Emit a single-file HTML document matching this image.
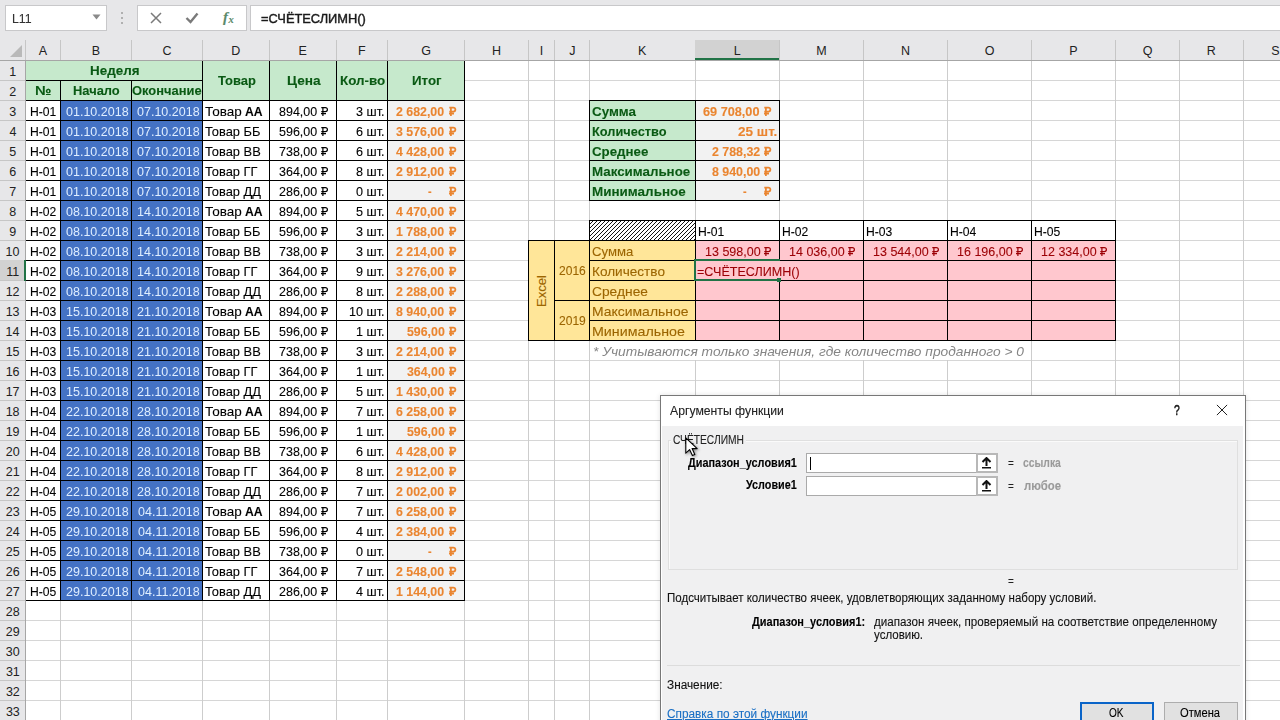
<!DOCTYPE html><html><head><meta charset="utf-8"><style>
html,body{margin:0;padding:0;}
body{width:1280px;height:720px;overflow:hidden;position:relative;background:#fff;font-family:"Liberation Sans",sans-serif;}
body>div{position:absolute;}
.t{white-space:nowrap;transform-origin:0 0;-webkit-text-stroke:0.1px currentColor;}
</style></head><body>
<div style="left:0px;top:0px;width:1280px;height:40px;background:#e7e7e9;"></div>
<div style="left:5px;top:5px;width:102px;height:26px;background:#fff;border:1px solid #c8c8ca;box-sizing:border-box;"></div>
<div style="left:137px;top:5px;width:110px;height:26px;background:#fff;border:1px solid #c8c8ca;box-sizing:border-box;"></div>
<div style="left:250px;top:5px;width:1040px;height:26px;background:#fff;border:1px solid #c8c8ca;box-sizing:border-box;"></div>
<div class="t" style="left:11.50px;top:11.00px;font-size:13px;line-height:15px;color:#333;font-weight:normal;font-style:normal;transform:scaleX(0.9501);">L11</div>
<svg style="position:absolute;left:92px;top:14px" width="9" height="6"><path d="M0.5 0.5 L8.5 0.5 L4.5 5.5Z" fill="#8a8a8a"/></svg>
<div style="left:121px;top:12px;width:2px;height:2px;background:#b0b0b0;"></div>
<div style="left:121px;top:17px;width:2px;height:2px;background:#b0b0b0;"></div>
<div style="left:121px;top:22px;width:2px;height:2px;background:#b0b0b0;"></div>
<svg style="position:absolute;left:150px;top:12px" width="12" height="12"><path d="M1 1 L11 11 M11 1 L1 11" stroke="#7a7a7a" stroke-width="1.5"/></svg>
<svg style="position:absolute;left:185px;top:12px" width="14" height="12"><path d="M1.5 6 L5.5 10 L12.5 1.5" stroke="#7a7a7a" stroke-width="2.4" fill="none"/></svg>
<div class="t" style="left:223px;top:9px;font-size:15px;line-height:17px;color:#5b8a6b;font-family:'Liberation Serif',serif;font-style:italic;font-weight:bold;">f</div>
<div class="t" style="left:228.5px;top:14px;font-size:10.5px;line-height:12px;color:#5b8a6b;font-family:'Liberation Serif',serif;font-style:italic;font-weight:bold;">x</div>
<div class="t" style="left:261.11px;top:11.80px;font-size:12px;line-height:14px;color:#1a1a1a;font-weight:normal;font-style:normal;transform:scaleX(1.0692);-webkit-text-stroke:0.4px #1a1a1a;">=СЧЁТЕСЛИМН()</div>
<div style="left:26px;top:80px;width:1260px;height:1px;background:#d6d6d6;"></div>
<div style="left:26px;top:100px;width:1260px;height:1px;background:#d6d6d6;"></div>
<div style="left:26px;top:120px;width:1260px;height:1px;background:#d6d6d6;"></div>
<div style="left:26px;top:140px;width:1260px;height:1px;background:#d6d6d6;"></div>
<div style="left:26px;top:160px;width:1260px;height:1px;background:#d6d6d6;"></div>
<div style="left:26px;top:180px;width:1260px;height:1px;background:#d6d6d6;"></div>
<div style="left:26px;top:200px;width:1260px;height:1px;background:#d6d6d6;"></div>
<div style="left:26px;top:220px;width:1260px;height:1px;background:#d6d6d6;"></div>
<div style="left:26px;top:240px;width:1260px;height:1px;background:#d6d6d6;"></div>
<div style="left:26px;top:260px;width:1260px;height:1px;background:#d6d6d6;"></div>
<div style="left:26px;top:280px;width:1260px;height:1px;background:#d6d6d6;"></div>
<div style="left:26px;top:300px;width:1260px;height:1px;background:#d6d6d6;"></div>
<div style="left:26px;top:320px;width:1260px;height:1px;background:#d6d6d6;"></div>
<div style="left:26px;top:340px;width:1260px;height:1px;background:#d6d6d6;"></div>
<div style="left:26px;top:360px;width:1260px;height:1px;background:#d6d6d6;"></div>
<div style="left:26px;top:380px;width:1260px;height:1px;background:#d6d6d6;"></div>
<div style="left:26px;top:400px;width:1260px;height:1px;background:#d6d6d6;"></div>
<div style="left:26px;top:420px;width:1260px;height:1px;background:#d6d6d6;"></div>
<div style="left:26px;top:440px;width:1260px;height:1px;background:#d6d6d6;"></div>
<div style="left:26px;top:460px;width:1260px;height:1px;background:#d6d6d6;"></div>
<div style="left:26px;top:480px;width:1260px;height:1px;background:#d6d6d6;"></div>
<div style="left:26px;top:500px;width:1260px;height:1px;background:#d6d6d6;"></div>
<div style="left:26px;top:520px;width:1260px;height:1px;background:#d6d6d6;"></div>
<div style="left:26px;top:540px;width:1260px;height:1px;background:#d6d6d6;"></div>
<div style="left:26px;top:560px;width:1260px;height:1px;background:#d6d6d6;"></div>
<div style="left:26px;top:580px;width:1260px;height:1px;background:#d6d6d6;"></div>
<div style="left:26px;top:600px;width:1260px;height:1px;background:#d6d6d6;"></div>
<div style="left:26px;top:620px;width:1260px;height:1px;background:#d6d6d6;"></div>
<div style="left:26px;top:640px;width:1260px;height:1px;background:#d6d6d6;"></div>
<div style="left:26px;top:660px;width:1260px;height:1px;background:#d6d6d6;"></div>
<div style="left:26px;top:680px;width:1260px;height:1px;background:#d6d6d6;"></div>
<div style="left:26px;top:700px;width:1260px;height:1px;background:#d6d6d6;"></div>
<div style="left:26px;top:720px;width:1260px;height:1px;background:#d6d6d6;"></div>
<div style="left:60px;top:61px;width:1px;height:660px;background:#cdcdcd;"></div>
<div style="left:131px;top:61px;width:1px;height:660px;background:#cdcdcd;"></div>
<div style="left:202px;top:61px;width:1px;height:660px;background:#cdcdcd;"></div>
<div style="left:269px;top:61px;width:1px;height:660px;background:#cdcdcd;"></div>
<div style="left:336px;top:61px;width:1px;height:660px;background:#cdcdcd;"></div>
<div style="left:387px;top:61px;width:1px;height:660px;background:#cdcdcd;"></div>
<div style="left:464px;top:61px;width:1px;height:660px;background:#cdcdcd;"></div>
<div style="left:528px;top:61px;width:1px;height:660px;background:#cdcdcd;"></div>
<div style="left:554px;top:61px;width:1px;height:660px;background:#cdcdcd;"></div>
<div style="left:589px;top:61px;width:1px;height:660px;background:#cdcdcd;"></div>
<div style="left:695px;top:61px;width:1px;height:660px;background:#cdcdcd;"></div>
<div style="left:779px;top:61px;width:1px;height:660px;background:#cdcdcd;"></div>
<div style="left:863px;top:61px;width:1px;height:660px;background:#cdcdcd;"></div>
<div style="left:947px;top:61px;width:1px;height:660px;background:#cdcdcd;"></div>
<div style="left:1031px;top:61px;width:1px;height:660px;background:#cdcdcd;"></div>
<div style="left:1115px;top:61px;width:1px;height:660px;background:#cdcdcd;"></div>
<div style="left:1179px;top:61px;width:1px;height:660px;background:#cdcdcd;"></div>
<div style="left:1243px;top:61px;width:1px;height:660px;background:#cdcdcd;"></div>
<div style="left:1307px;top:61px;width:1px;height:660px;background:#cdcdcd;"></div>
<div style="left:25px;top:60px;width:440px;height:41px;background:#c6e9cc;"></div>
<div style="left:25px;top:100px;width:36px;height:501px;background:#fff;"></div>
<div style="left:60px;top:100px;width:143px;height:501px;background:#4472c4;"></div>
<div style="left:202px;top:100px;width:186px;height:501px;background:#fff;"></div>
<div style="left:387px;top:100px;width:78px;height:501px;background:#f2f2f2;"></div>
<div style="left:25px;top:60px;width:178px;height:1px;background:#000;"></div>
<div style="left:25px;top:80px;width:178px;height:1px;background:#000;"></div>
<div style="left:25px;top:60px;width:1px;height:21px;background:#000;"></div>
<div style="left:202px;top:60px;width:1px;height:21px;background:#000;"></div>
<div style="left:25px;top:80px;width:36px;height:1px;background:#000;"></div>
<div style="left:25px;top:100px;width:36px;height:1px;background:#000;"></div>
<div style="left:25px;top:80px;width:1px;height:21px;background:#000;"></div>
<div style="left:60px;top:80px;width:1px;height:21px;background:#000;"></div>
<div style="left:60px;top:80px;width:72px;height:1px;background:#000;"></div>
<div style="left:60px;top:100px;width:72px;height:1px;background:#000;"></div>
<div style="left:60px;top:80px;width:1px;height:21px;background:#000;"></div>
<div style="left:131px;top:80px;width:1px;height:21px;background:#000;"></div>
<div style="left:131px;top:80px;width:72px;height:1px;background:#000;"></div>
<div style="left:131px;top:100px;width:72px;height:1px;background:#000;"></div>
<div style="left:131px;top:80px;width:1px;height:21px;background:#000;"></div>
<div style="left:202px;top:80px;width:1px;height:21px;background:#000;"></div>
<div style="left:202px;top:60px;width:68px;height:1px;background:#000;"></div>
<div style="left:202px;top:100px;width:68px;height:1px;background:#000;"></div>
<div style="left:202px;top:60px;width:1px;height:41px;background:#000;"></div>
<div style="left:269px;top:60px;width:1px;height:41px;background:#000;"></div>
<div style="left:269px;top:60px;width:68px;height:1px;background:#000;"></div>
<div style="left:269px;top:100px;width:68px;height:1px;background:#000;"></div>
<div style="left:269px;top:60px;width:1px;height:41px;background:#000;"></div>
<div style="left:336px;top:60px;width:1px;height:41px;background:#000;"></div>
<div style="left:336px;top:60px;width:52px;height:1px;background:#000;"></div>
<div style="left:336px;top:100px;width:52px;height:1px;background:#000;"></div>
<div style="left:336px;top:60px;width:1px;height:41px;background:#000;"></div>
<div style="left:387px;top:60px;width:1px;height:41px;background:#000;"></div>
<div style="left:387px;top:60px;width:78px;height:1px;background:#000;"></div>
<div style="left:387px;top:100px;width:78px;height:1px;background:#000;"></div>
<div style="left:387px;top:60px;width:1px;height:41px;background:#000;"></div>
<div style="left:464px;top:60px;width:1px;height:41px;background:#000;"></div>
<div style="left:25px;top:100px;width:36px;height:1px;background:#000;"></div>
<div style="left:25px;top:120px;width:36px;height:1px;background:#000;"></div>
<div style="left:25px;top:100px;width:1px;height:21px;background:#000;"></div>
<div style="left:60px;top:100px;width:1px;height:21px;background:#000;"></div>
<div style="left:60px;top:100px;width:72px;height:1px;background:#000;"></div>
<div style="left:60px;top:120px;width:72px;height:1px;background:#000;"></div>
<div style="left:60px;top:100px;width:1px;height:21px;background:#000;"></div>
<div style="left:131px;top:100px;width:1px;height:21px;background:#000;"></div>
<div style="left:131px;top:100px;width:72px;height:1px;background:#000;"></div>
<div style="left:131px;top:120px;width:72px;height:1px;background:#000;"></div>
<div style="left:131px;top:100px;width:1px;height:21px;background:#000;"></div>
<div style="left:202px;top:100px;width:1px;height:21px;background:#000;"></div>
<div style="left:202px;top:100px;width:68px;height:1px;background:#000;"></div>
<div style="left:202px;top:120px;width:68px;height:1px;background:#000;"></div>
<div style="left:202px;top:100px;width:1px;height:21px;background:#000;"></div>
<div style="left:269px;top:100px;width:1px;height:21px;background:#000;"></div>
<div style="left:269px;top:100px;width:68px;height:1px;background:#000;"></div>
<div style="left:269px;top:120px;width:68px;height:1px;background:#000;"></div>
<div style="left:269px;top:100px;width:1px;height:21px;background:#000;"></div>
<div style="left:336px;top:100px;width:1px;height:21px;background:#000;"></div>
<div style="left:336px;top:100px;width:52px;height:1px;background:#000;"></div>
<div style="left:336px;top:120px;width:52px;height:1px;background:#000;"></div>
<div style="left:336px;top:100px;width:1px;height:21px;background:#000;"></div>
<div style="left:387px;top:100px;width:1px;height:21px;background:#000;"></div>
<div style="left:387px;top:100px;width:78px;height:1px;background:#000;"></div>
<div style="left:387px;top:120px;width:78px;height:1px;background:#000;"></div>
<div style="left:387px;top:100px;width:1px;height:21px;background:#000;"></div>
<div style="left:464px;top:100px;width:1px;height:21px;background:#000;"></div>
<div style="left:25px;top:120px;width:36px;height:1px;background:#000;"></div>
<div style="left:25px;top:140px;width:36px;height:1px;background:#000;"></div>
<div style="left:25px;top:120px;width:1px;height:21px;background:#000;"></div>
<div style="left:60px;top:120px;width:1px;height:21px;background:#000;"></div>
<div style="left:60px;top:120px;width:72px;height:1px;background:#000;"></div>
<div style="left:60px;top:140px;width:72px;height:1px;background:#000;"></div>
<div style="left:60px;top:120px;width:1px;height:21px;background:#000;"></div>
<div style="left:131px;top:120px;width:1px;height:21px;background:#000;"></div>
<div style="left:131px;top:120px;width:72px;height:1px;background:#000;"></div>
<div style="left:131px;top:140px;width:72px;height:1px;background:#000;"></div>
<div style="left:131px;top:120px;width:1px;height:21px;background:#000;"></div>
<div style="left:202px;top:120px;width:1px;height:21px;background:#000;"></div>
<div style="left:202px;top:120px;width:68px;height:1px;background:#000;"></div>
<div style="left:202px;top:140px;width:68px;height:1px;background:#000;"></div>
<div style="left:202px;top:120px;width:1px;height:21px;background:#000;"></div>
<div style="left:269px;top:120px;width:1px;height:21px;background:#000;"></div>
<div style="left:269px;top:120px;width:68px;height:1px;background:#000;"></div>
<div style="left:269px;top:140px;width:68px;height:1px;background:#000;"></div>
<div style="left:269px;top:120px;width:1px;height:21px;background:#000;"></div>
<div style="left:336px;top:120px;width:1px;height:21px;background:#000;"></div>
<div style="left:336px;top:120px;width:52px;height:1px;background:#000;"></div>
<div style="left:336px;top:140px;width:52px;height:1px;background:#000;"></div>
<div style="left:336px;top:120px;width:1px;height:21px;background:#000;"></div>
<div style="left:387px;top:120px;width:1px;height:21px;background:#000;"></div>
<div style="left:387px;top:120px;width:78px;height:1px;background:#000;"></div>
<div style="left:387px;top:140px;width:78px;height:1px;background:#000;"></div>
<div style="left:387px;top:120px;width:1px;height:21px;background:#000;"></div>
<div style="left:464px;top:120px;width:1px;height:21px;background:#000;"></div>
<div style="left:25px;top:140px;width:36px;height:1px;background:#000;"></div>
<div style="left:25px;top:160px;width:36px;height:1px;background:#000;"></div>
<div style="left:25px;top:140px;width:1px;height:21px;background:#000;"></div>
<div style="left:60px;top:140px;width:1px;height:21px;background:#000;"></div>
<div style="left:60px;top:140px;width:72px;height:1px;background:#000;"></div>
<div style="left:60px;top:160px;width:72px;height:1px;background:#000;"></div>
<div style="left:60px;top:140px;width:1px;height:21px;background:#000;"></div>
<div style="left:131px;top:140px;width:1px;height:21px;background:#000;"></div>
<div style="left:131px;top:140px;width:72px;height:1px;background:#000;"></div>
<div style="left:131px;top:160px;width:72px;height:1px;background:#000;"></div>
<div style="left:131px;top:140px;width:1px;height:21px;background:#000;"></div>
<div style="left:202px;top:140px;width:1px;height:21px;background:#000;"></div>
<div style="left:202px;top:140px;width:68px;height:1px;background:#000;"></div>
<div style="left:202px;top:160px;width:68px;height:1px;background:#000;"></div>
<div style="left:202px;top:140px;width:1px;height:21px;background:#000;"></div>
<div style="left:269px;top:140px;width:1px;height:21px;background:#000;"></div>
<div style="left:269px;top:140px;width:68px;height:1px;background:#000;"></div>
<div style="left:269px;top:160px;width:68px;height:1px;background:#000;"></div>
<div style="left:269px;top:140px;width:1px;height:21px;background:#000;"></div>
<div style="left:336px;top:140px;width:1px;height:21px;background:#000;"></div>
<div style="left:336px;top:140px;width:52px;height:1px;background:#000;"></div>
<div style="left:336px;top:160px;width:52px;height:1px;background:#000;"></div>
<div style="left:336px;top:140px;width:1px;height:21px;background:#000;"></div>
<div style="left:387px;top:140px;width:1px;height:21px;background:#000;"></div>
<div style="left:387px;top:140px;width:78px;height:1px;background:#000;"></div>
<div style="left:387px;top:160px;width:78px;height:1px;background:#000;"></div>
<div style="left:387px;top:140px;width:1px;height:21px;background:#000;"></div>
<div style="left:464px;top:140px;width:1px;height:21px;background:#000;"></div>
<div style="left:25px;top:160px;width:36px;height:1px;background:#000;"></div>
<div style="left:25px;top:180px;width:36px;height:1px;background:#000;"></div>
<div style="left:25px;top:160px;width:1px;height:21px;background:#000;"></div>
<div style="left:60px;top:160px;width:1px;height:21px;background:#000;"></div>
<div style="left:60px;top:160px;width:72px;height:1px;background:#000;"></div>
<div style="left:60px;top:180px;width:72px;height:1px;background:#000;"></div>
<div style="left:60px;top:160px;width:1px;height:21px;background:#000;"></div>
<div style="left:131px;top:160px;width:1px;height:21px;background:#000;"></div>
<div style="left:131px;top:160px;width:72px;height:1px;background:#000;"></div>
<div style="left:131px;top:180px;width:72px;height:1px;background:#000;"></div>
<div style="left:131px;top:160px;width:1px;height:21px;background:#000;"></div>
<div style="left:202px;top:160px;width:1px;height:21px;background:#000;"></div>
<div style="left:202px;top:160px;width:68px;height:1px;background:#000;"></div>
<div style="left:202px;top:180px;width:68px;height:1px;background:#000;"></div>
<div style="left:202px;top:160px;width:1px;height:21px;background:#000;"></div>
<div style="left:269px;top:160px;width:1px;height:21px;background:#000;"></div>
<div style="left:269px;top:160px;width:68px;height:1px;background:#000;"></div>
<div style="left:269px;top:180px;width:68px;height:1px;background:#000;"></div>
<div style="left:269px;top:160px;width:1px;height:21px;background:#000;"></div>
<div style="left:336px;top:160px;width:1px;height:21px;background:#000;"></div>
<div style="left:336px;top:160px;width:52px;height:1px;background:#000;"></div>
<div style="left:336px;top:180px;width:52px;height:1px;background:#000;"></div>
<div style="left:336px;top:160px;width:1px;height:21px;background:#000;"></div>
<div style="left:387px;top:160px;width:1px;height:21px;background:#000;"></div>
<div style="left:387px;top:160px;width:78px;height:1px;background:#000;"></div>
<div style="left:387px;top:180px;width:78px;height:1px;background:#000;"></div>
<div style="left:387px;top:160px;width:1px;height:21px;background:#000;"></div>
<div style="left:464px;top:160px;width:1px;height:21px;background:#000;"></div>
<div style="left:25px;top:180px;width:36px;height:1px;background:#000;"></div>
<div style="left:25px;top:200px;width:36px;height:1px;background:#000;"></div>
<div style="left:25px;top:180px;width:1px;height:21px;background:#000;"></div>
<div style="left:60px;top:180px;width:1px;height:21px;background:#000;"></div>
<div style="left:60px;top:180px;width:72px;height:1px;background:#000;"></div>
<div style="left:60px;top:200px;width:72px;height:1px;background:#000;"></div>
<div style="left:60px;top:180px;width:1px;height:21px;background:#000;"></div>
<div style="left:131px;top:180px;width:1px;height:21px;background:#000;"></div>
<div style="left:131px;top:180px;width:72px;height:1px;background:#000;"></div>
<div style="left:131px;top:200px;width:72px;height:1px;background:#000;"></div>
<div style="left:131px;top:180px;width:1px;height:21px;background:#000;"></div>
<div style="left:202px;top:180px;width:1px;height:21px;background:#000;"></div>
<div style="left:202px;top:180px;width:68px;height:1px;background:#000;"></div>
<div style="left:202px;top:200px;width:68px;height:1px;background:#000;"></div>
<div style="left:202px;top:180px;width:1px;height:21px;background:#000;"></div>
<div style="left:269px;top:180px;width:1px;height:21px;background:#000;"></div>
<div style="left:269px;top:180px;width:68px;height:1px;background:#000;"></div>
<div style="left:269px;top:200px;width:68px;height:1px;background:#000;"></div>
<div style="left:269px;top:180px;width:1px;height:21px;background:#000;"></div>
<div style="left:336px;top:180px;width:1px;height:21px;background:#000;"></div>
<div style="left:336px;top:180px;width:52px;height:1px;background:#000;"></div>
<div style="left:336px;top:200px;width:52px;height:1px;background:#000;"></div>
<div style="left:336px;top:180px;width:1px;height:21px;background:#000;"></div>
<div style="left:387px;top:180px;width:1px;height:21px;background:#000;"></div>
<div style="left:387px;top:180px;width:78px;height:1px;background:#000;"></div>
<div style="left:387px;top:200px;width:78px;height:1px;background:#000;"></div>
<div style="left:387px;top:180px;width:1px;height:21px;background:#000;"></div>
<div style="left:464px;top:180px;width:1px;height:21px;background:#000;"></div>
<div style="left:25px;top:200px;width:36px;height:1px;background:#000;"></div>
<div style="left:25px;top:220px;width:36px;height:1px;background:#000;"></div>
<div style="left:25px;top:200px;width:1px;height:21px;background:#000;"></div>
<div style="left:60px;top:200px;width:1px;height:21px;background:#000;"></div>
<div style="left:60px;top:200px;width:72px;height:1px;background:#000;"></div>
<div style="left:60px;top:220px;width:72px;height:1px;background:#000;"></div>
<div style="left:60px;top:200px;width:1px;height:21px;background:#000;"></div>
<div style="left:131px;top:200px;width:1px;height:21px;background:#000;"></div>
<div style="left:131px;top:200px;width:72px;height:1px;background:#000;"></div>
<div style="left:131px;top:220px;width:72px;height:1px;background:#000;"></div>
<div style="left:131px;top:200px;width:1px;height:21px;background:#000;"></div>
<div style="left:202px;top:200px;width:1px;height:21px;background:#000;"></div>
<div style="left:202px;top:200px;width:68px;height:1px;background:#000;"></div>
<div style="left:202px;top:220px;width:68px;height:1px;background:#000;"></div>
<div style="left:202px;top:200px;width:1px;height:21px;background:#000;"></div>
<div style="left:269px;top:200px;width:1px;height:21px;background:#000;"></div>
<div style="left:269px;top:200px;width:68px;height:1px;background:#000;"></div>
<div style="left:269px;top:220px;width:68px;height:1px;background:#000;"></div>
<div style="left:269px;top:200px;width:1px;height:21px;background:#000;"></div>
<div style="left:336px;top:200px;width:1px;height:21px;background:#000;"></div>
<div style="left:336px;top:200px;width:52px;height:1px;background:#000;"></div>
<div style="left:336px;top:220px;width:52px;height:1px;background:#000;"></div>
<div style="left:336px;top:200px;width:1px;height:21px;background:#000;"></div>
<div style="left:387px;top:200px;width:1px;height:21px;background:#000;"></div>
<div style="left:387px;top:200px;width:78px;height:1px;background:#000;"></div>
<div style="left:387px;top:220px;width:78px;height:1px;background:#000;"></div>
<div style="left:387px;top:200px;width:1px;height:21px;background:#000;"></div>
<div style="left:464px;top:200px;width:1px;height:21px;background:#000;"></div>
<div style="left:25px;top:220px;width:36px;height:1px;background:#000;"></div>
<div style="left:25px;top:240px;width:36px;height:1px;background:#000;"></div>
<div style="left:25px;top:220px;width:1px;height:21px;background:#000;"></div>
<div style="left:60px;top:220px;width:1px;height:21px;background:#000;"></div>
<div style="left:60px;top:220px;width:72px;height:1px;background:#000;"></div>
<div style="left:60px;top:240px;width:72px;height:1px;background:#000;"></div>
<div style="left:60px;top:220px;width:1px;height:21px;background:#000;"></div>
<div style="left:131px;top:220px;width:1px;height:21px;background:#000;"></div>
<div style="left:131px;top:220px;width:72px;height:1px;background:#000;"></div>
<div style="left:131px;top:240px;width:72px;height:1px;background:#000;"></div>
<div style="left:131px;top:220px;width:1px;height:21px;background:#000;"></div>
<div style="left:202px;top:220px;width:1px;height:21px;background:#000;"></div>
<div style="left:202px;top:220px;width:68px;height:1px;background:#000;"></div>
<div style="left:202px;top:240px;width:68px;height:1px;background:#000;"></div>
<div style="left:202px;top:220px;width:1px;height:21px;background:#000;"></div>
<div style="left:269px;top:220px;width:1px;height:21px;background:#000;"></div>
<div style="left:269px;top:220px;width:68px;height:1px;background:#000;"></div>
<div style="left:269px;top:240px;width:68px;height:1px;background:#000;"></div>
<div style="left:269px;top:220px;width:1px;height:21px;background:#000;"></div>
<div style="left:336px;top:220px;width:1px;height:21px;background:#000;"></div>
<div style="left:336px;top:220px;width:52px;height:1px;background:#000;"></div>
<div style="left:336px;top:240px;width:52px;height:1px;background:#000;"></div>
<div style="left:336px;top:220px;width:1px;height:21px;background:#000;"></div>
<div style="left:387px;top:220px;width:1px;height:21px;background:#000;"></div>
<div style="left:387px;top:220px;width:78px;height:1px;background:#000;"></div>
<div style="left:387px;top:240px;width:78px;height:1px;background:#000;"></div>
<div style="left:387px;top:220px;width:1px;height:21px;background:#000;"></div>
<div style="left:464px;top:220px;width:1px;height:21px;background:#000;"></div>
<div style="left:25px;top:240px;width:36px;height:1px;background:#000;"></div>
<div style="left:25px;top:260px;width:36px;height:1px;background:#000;"></div>
<div style="left:25px;top:240px;width:1px;height:21px;background:#000;"></div>
<div style="left:60px;top:240px;width:1px;height:21px;background:#000;"></div>
<div style="left:60px;top:240px;width:72px;height:1px;background:#000;"></div>
<div style="left:60px;top:260px;width:72px;height:1px;background:#000;"></div>
<div style="left:60px;top:240px;width:1px;height:21px;background:#000;"></div>
<div style="left:131px;top:240px;width:1px;height:21px;background:#000;"></div>
<div style="left:131px;top:240px;width:72px;height:1px;background:#000;"></div>
<div style="left:131px;top:260px;width:72px;height:1px;background:#000;"></div>
<div style="left:131px;top:240px;width:1px;height:21px;background:#000;"></div>
<div style="left:202px;top:240px;width:1px;height:21px;background:#000;"></div>
<div style="left:202px;top:240px;width:68px;height:1px;background:#000;"></div>
<div style="left:202px;top:260px;width:68px;height:1px;background:#000;"></div>
<div style="left:202px;top:240px;width:1px;height:21px;background:#000;"></div>
<div style="left:269px;top:240px;width:1px;height:21px;background:#000;"></div>
<div style="left:269px;top:240px;width:68px;height:1px;background:#000;"></div>
<div style="left:269px;top:260px;width:68px;height:1px;background:#000;"></div>
<div style="left:269px;top:240px;width:1px;height:21px;background:#000;"></div>
<div style="left:336px;top:240px;width:1px;height:21px;background:#000;"></div>
<div style="left:336px;top:240px;width:52px;height:1px;background:#000;"></div>
<div style="left:336px;top:260px;width:52px;height:1px;background:#000;"></div>
<div style="left:336px;top:240px;width:1px;height:21px;background:#000;"></div>
<div style="left:387px;top:240px;width:1px;height:21px;background:#000;"></div>
<div style="left:387px;top:240px;width:78px;height:1px;background:#000;"></div>
<div style="left:387px;top:260px;width:78px;height:1px;background:#000;"></div>
<div style="left:387px;top:240px;width:1px;height:21px;background:#000;"></div>
<div style="left:464px;top:240px;width:1px;height:21px;background:#000;"></div>
<div style="left:25px;top:260px;width:36px;height:1px;background:#000;"></div>
<div style="left:25px;top:280px;width:36px;height:1px;background:#000;"></div>
<div style="left:25px;top:260px;width:1px;height:21px;background:#000;"></div>
<div style="left:60px;top:260px;width:1px;height:21px;background:#000;"></div>
<div style="left:60px;top:260px;width:72px;height:1px;background:#000;"></div>
<div style="left:60px;top:280px;width:72px;height:1px;background:#000;"></div>
<div style="left:60px;top:260px;width:1px;height:21px;background:#000;"></div>
<div style="left:131px;top:260px;width:1px;height:21px;background:#000;"></div>
<div style="left:131px;top:260px;width:72px;height:1px;background:#000;"></div>
<div style="left:131px;top:280px;width:72px;height:1px;background:#000;"></div>
<div style="left:131px;top:260px;width:1px;height:21px;background:#000;"></div>
<div style="left:202px;top:260px;width:1px;height:21px;background:#000;"></div>
<div style="left:202px;top:260px;width:68px;height:1px;background:#000;"></div>
<div style="left:202px;top:280px;width:68px;height:1px;background:#000;"></div>
<div style="left:202px;top:260px;width:1px;height:21px;background:#000;"></div>
<div style="left:269px;top:260px;width:1px;height:21px;background:#000;"></div>
<div style="left:269px;top:260px;width:68px;height:1px;background:#000;"></div>
<div style="left:269px;top:280px;width:68px;height:1px;background:#000;"></div>
<div style="left:269px;top:260px;width:1px;height:21px;background:#000;"></div>
<div style="left:336px;top:260px;width:1px;height:21px;background:#000;"></div>
<div style="left:336px;top:260px;width:52px;height:1px;background:#000;"></div>
<div style="left:336px;top:280px;width:52px;height:1px;background:#000;"></div>
<div style="left:336px;top:260px;width:1px;height:21px;background:#000;"></div>
<div style="left:387px;top:260px;width:1px;height:21px;background:#000;"></div>
<div style="left:387px;top:260px;width:78px;height:1px;background:#000;"></div>
<div style="left:387px;top:280px;width:78px;height:1px;background:#000;"></div>
<div style="left:387px;top:260px;width:1px;height:21px;background:#000;"></div>
<div style="left:464px;top:260px;width:1px;height:21px;background:#000;"></div>
<div style="left:25px;top:280px;width:36px;height:1px;background:#000;"></div>
<div style="left:25px;top:300px;width:36px;height:1px;background:#000;"></div>
<div style="left:25px;top:280px;width:1px;height:21px;background:#000;"></div>
<div style="left:60px;top:280px;width:1px;height:21px;background:#000;"></div>
<div style="left:60px;top:280px;width:72px;height:1px;background:#000;"></div>
<div style="left:60px;top:300px;width:72px;height:1px;background:#000;"></div>
<div style="left:60px;top:280px;width:1px;height:21px;background:#000;"></div>
<div style="left:131px;top:280px;width:1px;height:21px;background:#000;"></div>
<div style="left:131px;top:280px;width:72px;height:1px;background:#000;"></div>
<div style="left:131px;top:300px;width:72px;height:1px;background:#000;"></div>
<div style="left:131px;top:280px;width:1px;height:21px;background:#000;"></div>
<div style="left:202px;top:280px;width:1px;height:21px;background:#000;"></div>
<div style="left:202px;top:280px;width:68px;height:1px;background:#000;"></div>
<div style="left:202px;top:300px;width:68px;height:1px;background:#000;"></div>
<div style="left:202px;top:280px;width:1px;height:21px;background:#000;"></div>
<div style="left:269px;top:280px;width:1px;height:21px;background:#000;"></div>
<div style="left:269px;top:280px;width:68px;height:1px;background:#000;"></div>
<div style="left:269px;top:300px;width:68px;height:1px;background:#000;"></div>
<div style="left:269px;top:280px;width:1px;height:21px;background:#000;"></div>
<div style="left:336px;top:280px;width:1px;height:21px;background:#000;"></div>
<div style="left:336px;top:280px;width:52px;height:1px;background:#000;"></div>
<div style="left:336px;top:300px;width:52px;height:1px;background:#000;"></div>
<div style="left:336px;top:280px;width:1px;height:21px;background:#000;"></div>
<div style="left:387px;top:280px;width:1px;height:21px;background:#000;"></div>
<div style="left:387px;top:280px;width:78px;height:1px;background:#000;"></div>
<div style="left:387px;top:300px;width:78px;height:1px;background:#000;"></div>
<div style="left:387px;top:280px;width:1px;height:21px;background:#000;"></div>
<div style="left:464px;top:280px;width:1px;height:21px;background:#000;"></div>
<div style="left:25px;top:300px;width:36px;height:1px;background:#000;"></div>
<div style="left:25px;top:320px;width:36px;height:1px;background:#000;"></div>
<div style="left:25px;top:300px;width:1px;height:21px;background:#000;"></div>
<div style="left:60px;top:300px;width:1px;height:21px;background:#000;"></div>
<div style="left:60px;top:300px;width:72px;height:1px;background:#000;"></div>
<div style="left:60px;top:320px;width:72px;height:1px;background:#000;"></div>
<div style="left:60px;top:300px;width:1px;height:21px;background:#000;"></div>
<div style="left:131px;top:300px;width:1px;height:21px;background:#000;"></div>
<div style="left:131px;top:300px;width:72px;height:1px;background:#000;"></div>
<div style="left:131px;top:320px;width:72px;height:1px;background:#000;"></div>
<div style="left:131px;top:300px;width:1px;height:21px;background:#000;"></div>
<div style="left:202px;top:300px;width:1px;height:21px;background:#000;"></div>
<div style="left:202px;top:300px;width:68px;height:1px;background:#000;"></div>
<div style="left:202px;top:320px;width:68px;height:1px;background:#000;"></div>
<div style="left:202px;top:300px;width:1px;height:21px;background:#000;"></div>
<div style="left:269px;top:300px;width:1px;height:21px;background:#000;"></div>
<div style="left:269px;top:300px;width:68px;height:1px;background:#000;"></div>
<div style="left:269px;top:320px;width:68px;height:1px;background:#000;"></div>
<div style="left:269px;top:300px;width:1px;height:21px;background:#000;"></div>
<div style="left:336px;top:300px;width:1px;height:21px;background:#000;"></div>
<div style="left:336px;top:300px;width:52px;height:1px;background:#000;"></div>
<div style="left:336px;top:320px;width:52px;height:1px;background:#000;"></div>
<div style="left:336px;top:300px;width:1px;height:21px;background:#000;"></div>
<div style="left:387px;top:300px;width:1px;height:21px;background:#000;"></div>
<div style="left:387px;top:300px;width:78px;height:1px;background:#000;"></div>
<div style="left:387px;top:320px;width:78px;height:1px;background:#000;"></div>
<div style="left:387px;top:300px;width:1px;height:21px;background:#000;"></div>
<div style="left:464px;top:300px;width:1px;height:21px;background:#000;"></div>
<div style="left:25px;top:320px;width:36px;height:1px;background:#000;"></div>
<div style="left:25px;top:340px;width:36px;height:1px;background:#000;"></div>
<div style="left:25px;top:320px;width:1px;height:21px;background:#000;"></div>
<div style="left:60px;top:320px;width:1px;height:21px;background:#000;"></div>
<div style="left:60px;top:320px;width:72px;height:1px;background:#000;"></div>
<div style="left:60px;top:340px;width:72px;height:1px;background:#000;"></div>
<div style="left:60px;top:320px;width:1px;height:21px;background:#000;"></div>
<div style="left:131px;top:320px;width:1px;height:21px;background:#000;"></div>
<div style="left:131px;top:320px;width:72px;height:1px;background:#000;"></div>
<div style="left:131px;top:340px;width:72px;height:1px;background:#000;"></div>
<div style="left:131px;top:320px;width:1px;height:21px;background:#000;"></div>
<div style="left:202px;top:320px;width:1px;height:21px;background:#000;"></div>
<div style="left:202px;top:320px;width:68px;height:1px;background:#000;"></div>
<div style="left:202px;top:340px;width:68px;height:1px;background:#000;"></div>
<div style="left:202px;top:320px;width:1px;height:21px;background:#000;"></div>
<div style="left:269px;top:320px;width:1px;height:21px;background:#000;"></div>
<div style="left:269px;top:320px;width:68px;height:1px;background:#000;"></div>
<div style="left:269px;top:340px;width:68px;height:1px;background:#000;"></div>
<div style="left:269px;top:320px;width:1px;height:21px;background:#000;"></div>
<div style="left:336px;top:320px;width:1px;height:21px;background:#000;"></div>
<div style="left:336px;top:320px;width:52px;height:1px;background:#000;"></div>
<div style="left:336px;top:340px;width:52px;height:1px;background:#000;"></div>
<div style="left:336px;top:320px;width:1px;height:21px;background:#000;"></div>
<div style="left:387px;top:320px;width:1px;height:21px;background:#000;"></div>
<div style="left:387px;top:320px;width:78px;height:1px;background:#000;"></div>
<div style="left:387px;top:340px;width:78px;height:1px;background:#000;"></div>
<div style="left:387px;top:320px;width:1px;height:21px;background:#000;"></div>
<div style="left:464px;top:320px;width:1px;height:21px;background:#000;"></div>
<div style="left:25px;top:340px;width:36px;height:1px;background:#000;"></div>
<div style="left:25px;top:360px;width:36px;height:1px;background:#000;"></div>
<div style="left:25px;top:340px;width:1px;height:21px;background:#000;"></div>
<div style="left:60px;top:340px;width:1px;height:21px;background:#000;"></div>
<div style="left:60px;top:340px;width:72px;height:1px;background:#000;"></div>
<div style="left:60px;top:360px;width:72px;height:1px;background:#000;"></div>
<div style="left:60px;top:340px;width:1px;height:21px;background:#000;"></div>
<div style="left:131px;top:340px;width:1px;height:21px;background:#000;"></div>
<div style="left:131px;top:340px;width:72px;height:1px;background:#000;"></div>
<div style="left:131px;top:360px;width:72px;height:1px;background:#000;"></div>
<div style="left:131px;top:340px;width:1px;height:21px;background:#000;"></div>
<div style="left:202px;top:340px;width:1px;height:21px;background:#000;"></div>
<div style="left:202px;top:340px;width:68px;height:1px;background:#000;"></div>
<div style="left:202px;top:360px;width:68px;height:1px;background:#000;"></div>
<div style="left:202px;top:340px;width:1px;height:21px;background:#000;"></div>
<div style="left:269px;top:340px;width:1px;height:21px;background:#000;"></div>
<div style="left:269px;top:340px;width:68px;height:1px;background:#000;"></div>
<div style="left:269px;top:360px;width:68px;height:1px;background:#000;"></div>
<div style="left:269px;top:340px;width:1px;height:21px;background:#000;"></div>
<div style="left:336px;top:340px;width:1px;height:21px;background:#000;"></div>
<div style="left:336px;top:340px;width:52px;height:1px;background:#000;"></div>
<div style="left:336px;top:360px;width:52px;height:1px;background:#000;"></div>
<div style="left:336px;top:340px;width:1px;height:21px;background:#000;"></div>
<div style="left:387px;top:340px;width:1px;height:21px;background:#000;"></div>
<div style="left:387px;top:340px;width:78px;height:1px;background:#000;"></div>
<div style="left:387px;top:360px;width:78px;height:1px;background:#000;"></div>
<div style="left:387px;top:340px;width:1px;height:21px;background:#000;"></div>
<div style="left:464px;top:340px;width:1px;height:21px;background:#000;"></div>
<div style="left:25px;top:360px;width:36px;height:1px;background:#000;"></div>
<div style="left:25px;top:380px;width:36px;height:1px;background:#000;"></div>
<div style="left:25px;top:360px;width:1px;height:21px;background:#000;"></div>
<div style="left:60px;top:360px;width:1px;height:21px;background:#000;"></div>
<div style="left:60px;top:360px;width:72px;height:1px;background:#000;"></div>
<div style="left:60px;top:380px;width:72px;height:1px;background:#000;"></div>
<div style="left:60px;top:360px;width:1px;height:21px;background:#000;"></div>
<div style="left:131px;top:360px;width:1px;height:21px;background:#000;"></div>
<div style="left:131px;top:360px;width:72px;height:1px;background:#000;"></div>
<div style="left:131px;top:380px;width:72px;height:1px;background:#000;"></div>
<div style="left:131px;top:360px;width:1px;height:21px;background:#000;"></div>
<div style="left:202px;top:360px;width:1px;height:21px;background:#000;"></div>
<div style="left:202px;top:360px;width:68px;height:1px;background:#000;"></div>
<div style="left:202px;top:380px;width:68px;height:1px;background:#000;"></div>
<div style="left:202px;top:360px;width:1px;height:21px;background:#000;"></div>
<div style="left:269px;top:360px;width:1px;height:21px;background:#000;"></div>
<div style="left:269px;top:360px;width:68px;height:1px;background:#000;"></div>
<div style="left:269px;top:380px;width:68px;height:1px;background:#000;"></div>
<div style="left:269px;top:360px;width:1px;height:21px;background:#000;"></div>
<div style="left:336px;top:360px;width:1px;height:21px;background:#000;"></div>
<div style="left:336px;top:360px;width:52px;height:1px;background:#000;"></div>
<div style="left:336px;top:380px;width:52px;height:1px;background:#000;"></div>
<div style="left:336px;top:360px;width:1px;height:21px;background:#000;"></div>
<div style="left:387px;top:360px;width:1px;height:21px;background:#000;"></div>
<div style="left:387px;top:360px;width:78px;height:1px;background:#000;"></div>
<div style="left:387px;top:380px;width:78px;height:1px;background:#000;"></div>
<div style="left:387px;top:360px;width:1px;height:21px;background:#000;"></div>
<div style="left:464px;top:360px;width:1px;height:21px;background:#000;"></div>
<div style="left:25px;top:380px;width:36px;height:1px;background:#000;"></div>
<div style="left:25px;top:400px;width:36px;height:1px;background:#000;"></div>
<div style="left:25px;top:380px;width:1px;height:21px;background:#000;"></div>
<div style="left:60px;top:380px;width:1px;height:21px;background:#000;"></div>
<div style="left:60px;top:380px;width:72px;height:1px;background:#000;"></div>
<div style="left:60px;top:400px;width:72px;height:1px;background:#000;"></div>
<div style="left:60px;top:380px;width:1px;height:21px;background:#000;"></div>
<div style="left:131px;top:380px;width:1px;height:21px;background:#000;"></div>
<div style="left:131px;top:380px;width:72px;height:1px;background:#000;"></div>
<div style="left:131px;top:400px;width:72px;height:1px;background:#000;"></div>
<div style="left:131px;top:380px;width:1px;height:21px;background:#000;"></div>
<div style="left:202px;top:380px;width:1px;height:21px;background:#000;"></div>
<div style="left:202px;top:380px;width:68px;height:1px;background:#000;"></div>
<div style="left:202px;top:400px;width:68px;height:1px;background:#000;"></div>
<div style="left:202px;top:380px;width:1px;height:21px;background:#000;"></div>
<div style="left:269px;top:380px;width:1px;height:21px;background:#000;"></div>
<div style="left:269px;top:380px;width:68px;height:1px;background:#000;"></div>
<div style="left:269px;top:400px;width:68px;height:1px;background:#000;"></div>
<div style="left:269px;top:380px;width:1px;height:21px;background:#000;"></div>
<div style="left:336px;top:380px;width:1px;height:21px;background:#000;"></div>
<div style="left:336px;top:380px;width:52px;height:1px;background:#000;"></div>
<div style="left:336px;top:400px;width:52px;height:1px;background:#000;"></div>
<div style="left:336px;top:380px;width:1px;height:21px;background:#000;"></div>
<div style="left:387px;top:380px;width:1px;height:21px;background:#000;"></div>
<div style="left:387px;top:380px;width:78px;height:1px;background:#000;"></div>
<div style="left:387px;top:400px;width:78px;height:1px;background:#000;"></div>
<div style="left:387px;top:380px;width:1px;height:21px;background:#000;"></div>
<div style="left:464px;top:380px;width:1px;height:21px;background:#000;"></div>
<div style="left:25px;top:400px;width:36px;height:1px;background:#000;"></div>
<div style="left:25px;top:420px;width:36px;height:1px;background:#000;"></div>
<div style="left:25px;top:400px;width:1px;height:21px;background:#000;"></div>
<div style="left:60px;top:400px;width:1px;height:21px;background:#000;"></div>
<div style="left:60px;top:400px;width:72px;height:1px;background:#000;"></div>
<div style="left:60px;top:420px;width:72px;height:1px;background:#000;"></div>
<div style="left:60px;top:400px;width:1px;height:21px;background:#000;"></div>
<div style="left:131px;top:400px;width:1px;height:21px;background:#000;"></div>
<div style="left:131px;top:400px;width:72px;height:1px;background:#000;"></div>
<div style="left:131px;top:420px;width:72px;height:1px;background:#000;"></div>
<div style="left:131px;top:400px;width:1px;height:21px;background:#000;"></div>
<div style="left:202px;top:400px;width:1px;height:21px;background:#000;"></div>
<div style="left:202px;top:400px;width:68px;height:1px;background:#000;"></div>
<div style="left:202px;top:420px;width:68px;height:1px;background:#000;"></div>
<div style="left:202px;top:400px;width:1px;height:21px;background:#000;"></div>
<div style="left:269px;top:400px;width:1px;height:21px;background:#000;"></div>
<div style="left:269px;top:400px;width:68px;height:1px;background:#000;"></div>
<div style="left:269px;top:420px;width:68px;height:1px;background:#000;"></div>
<div style="left:269px;top:400px;width:1px;height:21px;background:#000;"></div>
<div style="left:336px;top:400px;width:1px;height:21px;background:#000;"></div>
<div style="left:336px;top:400px;width:52px;height:1px;background:#000;"></div>
<div style="left:336px;top:420px;width:52px;height:1px;background:#000;"></div>
<div style="left:336px;top:400px;width:1px;height:21px;background:#000;"></div>
<div style="left:387px;top:400px;width:1px;height:21px;background:#000;"></div>
<div style="left:387px;top:400px;width:78px;height:1px;background:#000;"></div>
<div style="left:387px;top:420px;width:78px;height:1px;background:#000;"></div>
<div style="left:387px;top:400px;width:1px;height:21px;background:#000;"></div>
<div style="left:464px;top:400px;width:1px;height:21px;background:#000;"></div>
<div style="left:25px;top:420px;width:36px;height:1px;background:#000;"></div>
<div style="left:25px;top:440px;width:36px;height:1px;background:#000;"></div>
<div style="left:25px;top:420px;width:1px;height:21px;background:#000;"></div>
<div style="left:60px;top:420px;width:1px;height:21px;background:#000;"></div>
<div style="left:60px;top:420px;width:72px;height:1px;background:#000;"></div>
<div style="left:60px;top:440px;width:72px;height:1px;background:#000;"></div>
<div style="left:60px;top:420px;width:1px;height:21px;background:#000;"></div>
<div style="left:131px;top:420px;width:1px;height:21px;background:#000;"></div>
<div style="left:131px;top:420px;width:72px;height:1px;background:#000;"></div>
<div style="left:131px;top:440px;width:72px;height:1px;background:#000;"></div>
<div style="left:131px;top:420px;width:1px;height:21px;background:#000;"></div>
<div style="left:202px;top:420px;width:1px;height:21px;background:#000;"></div>
<div style="left:202px;top:420px;width:68px;height:1px;background:#000;"></div>
<div style="left:202px;top:440px;width:68px;height:1px;background:#000;"></div>
<div style="left:202px;top:420px;width:1px;height:21px;background:#000;"></div>
<div style="left:269px;top:420px;width:1px;height:21px;background:#000;"></div>
<div style="left:269px;top:420px;width:68px;height:1px;background:#000;"></div>
<div style="left:269px;top:440px;width:68px;height:1px;background:#000;"></div>
<div style="left:269px;top:420px;width:1px;height:21px;background:#000;"></div>
<div style="left:336px;top:420px;width:1px;height:21px;background:#000;"></div>
<div style="left:336px;top:420px;width:52px;height:1px;background:#000;"></div>
<div style="left:336px;top:440px;width:52px;height:1px;background:#000;"></div>
<div style="left:336px;top:420px;width:1px;height:21px;background:#000;"></div>
<div style="left:387px;top:420px;width:1px;height:21px;background:#000;"></div>
<div style="left:387px;top:420px;width:78px;height:1px;background:#000;"></div>
<div style="left:387px;top:440px;width:78px;height:1px;background:#000;"></div>
<div style="left:387px;top:420px;width:1px;height:21px;background:#000;"></div>
<div style="left:464px;top:420px;width:1px;height:21px;background:#000;"></div>
<div style="left:25px;top:440px;width:36px;height:1px;background:#000;"></div>
<div style="left:25px;top:460px;width:36px;height:1px;background:#000;"></div>
<div style="left:25px;top:440px;width:1px;height:21px;background:#000;"></div>
<div style="left:60px;top:440px;width:1px;height:21px;background:#000;"></div>
<div style="left:60px;top:440px;width:72px;height:1px;background:#000;"></div>
<div style="left:60px;top:460px;width:72px;height:1px;background:#000;"></div>
<div style="left:60px;top:440px;width:1px;height:21px;background:#000;"></div>
<div style="left:131px;top:440px;width:1px;height:21px;background:#000;"></div>
<div style="left:131px;top:440px;width:72px;height:1px;background:#000;"></div>
<div style="left:131px;top:460px;width:72px;height:1px;background:#000;"></div>
<div style="left:131px;top:440px;width:1px;height:21px;background:#000;"></div>
<div style="left:202px;top:440px;width:1px;height:21px;background:#000;"></div>
<div style="left:202px;top:440px;width:68px;height:1px;background:#000;"></div>
<div style="left:202px;top:460px;width:68px;height:1px;background:#000;"></div>
<div style="left:202px;top:440px;width:1px;height:21px;background:#000;"></div>
<div style="left:269px;top:440px;width:1px;height:21px;background:#000;"></div>
<div style="left:269px;top:440px;width:68px;height:1px;background:#000;"></div>
<div style="left:269px;top:460px;width:68px;height:1px;background:#000;"></div>
<div style="left:269px;top:440px;width:1px;height:21px;background:#000;"></div>
<div style="left:336px;top:440px;width:1px;height:21px;background:#000;"></div>
<div style="left:336px;top:440px;width:52px;height:1px;background:#000;"></div>
<div style="left:336px;top:460px;width:52px;height:1px;background:#000;"></div>
<div style="left:336px;top:440px;width:1px;height:21px;background:#000;"></div>
<div style="left:387px;top:440px;width:1px;height:21px;background:#000;"></div>
<div style="left:387px;top:440px;width:78px;height:1px;background:#000;"></div>
<div style="left:387px;top:460px;width:78px;height:1px;background:#000;"></div>
<div style="left:387px;top:440px;width:1px;height:21px;background:#000;"></div>
<div style="left:464px;top:440px;width:1px;height:21px;background:#000;"></div>
<div style="left:25px;top:460px;width:36px;height:1px;background:#000;"></div>
<div style="left:25px;top:480px;width:36px;height:1px;background:#000;"></div>
<div style="left:25px;top:460px;width:1px;height:21px;background:#000;"></div>
<div style="left:60px;top:460px;width:1px;height:21px;background:#000;"></div>
<div style="left:60px;top:460px;width:72px;height:1px;background:#000;"></div>
<div style="left:60px;top:480px;width:72px;height:1px;background:#000;"></div>
<div style="left:60px;top:460px;width:1px;height:21px;background:#000;"></div>
<div style="left:131px;top:460px;width:1px;height:21px;background:#000;"></div>
<div style="left:131px;top:460px;width:72px;height:1px;background:#000;"></div>
<div style="left:131px;top:480px;width:72px;height:1px;background:#000;"></div>
<div style="left:131px;top:460px;width:1px;height:21px;background:#000;"></div>
<div style="left:202px;top:460px;width:1px;height:21px;background:#000;"></div>
<div style="left:202px;top:460px;width:68px;height:1px;background:#000;"></div>
<div style="left:202px;top:480px;width:68px;height:1px;background:#000;"></div>
<div style="left:202px;top:460px;width:1px;height:21px;background:#000;"></div>
<div style="left:269px;top:460px;width:1px;height:21px;background:#000;"></div>
<div style="left:269px;top:460px;width:68px;height:1px;background:#000;"></div>
<div style="left:269px;top:480px;width:68px;height:1px;background:#000;"></div>
<div style="left:269px;top:460px;width:1px;height:21px;background:#000;"></div>
<div style="left:336px;top:460px;width:1px;height:21px;background:#000;"></div>
<div style="left:336px;top:460px;width:52px;height:1px;background:#000;"></div>
<div style="left:336px;top:480px;width:52px;height:1px;background:#000;"></div>
<div style="left:336px;top:460px;width:1px;height:21px;background:#000;"></div>
<div style="left:387px;top:460px;width:1px;height:21px;background:#000;"></div>
<div style="left:387px;top:460px;width:78px;height:1px;background:#000;"></div>
<div style="left:387px;top:480px;width:78px;height:1px;background:#000;"></div>
<div style="left:387px;top:460px;width:1px;height:21px;background:#000;"></div>
<div style="left:464px;top:460px;width:1px;height:21px;background:#000;"></div>
<div style="left:25px;top:480px;width:36px;height:1px;background:#000;"></div>
<div style="left:25px;top:500px;width:36px;height:1px;background:#000;"></div>
<div style="left:25px;top:480px;width:1px;height:21px;background:#000;"></div>
<div style="left:60px;top:480px;width:1px;height:21px;background:#000;"></div>
<div style="left:60px;top:480px;width:72px;height:1px;background:#000;"></div>
<div style="left:60px;top:500px;width:72px;height:1px;background:#000;"></div>
<div style="left:60px;top:480px;width:1px;height:21px;background:#000;"></div>
<div style="left:131px;top:480px;width:1px;height:21px;background:#000;"></div>
<div style="left:131px;top:480px;width:72px;height:1px;background:#000;"></div>
<div style="left:131px;top:500px;width:72px;height:1px;background:#000;"></div>
<div style="left:131px;top:480px;width:1px;height:21px;background:#000;"></div>
<div style="left:202px;top:480px;width:1px;height:21px;background:#000;"></div>
<div style="left:202px;top:480px;width:68px;height:1px;background:#000;"></div>
<div style="left:202px;top:500px;width:68px;height:1px;background:#000;"></div>
<div style="left:202px;top:480px;width:1px;height:21px;background:#000;"></div>
<div style="left:269px;top:480px;width:1px;height:21px;background:#000;"></div>
<div style="left:269px;top:480px;width:68px;height:1px;background:#000;"></div>
<div style="left:269px;top:500px;width:68px;height:1px;background:#000;"></div>
<div style="left:269px;top:480px;width:1px;height:21px;background:#000;"></div>
<div style="left:336px;top:480px;width:1px;height:21px;background:#000;"></div>
<div style="left:336px;top:480px;width:52px;height:1px;background:#000;"></div>
<div style="left:336px;top:500px;width:52px;height:1px;background:#000;"></div>
<div style="left:336px;top:480px;width:1px;height:21px;background:#000;"></div>
<div style="left:387px;top:480px;width:1px;height:21px;background:#000;"></div>
<div style="left:387px;top:480px;width:78px;height:1px;background:#000;"></div>
<div style="left:387px;top:500px;width:78px;height:1px;background:#000;"></div>
<div style="left:387px;top:480px;width:1px;height:21px;background:#000;"></div>
<div style="left:464px;top:480px;width:1px;height:21px;background:#000;"></div>
<div style="left:25px;top:500px;width:36px;height:1px;background:#000;"></div>
<div style="left:25px;top:520px;width:36px;height:1px;background:#000;"></div>
<div style="left:25px;top:500px;width:1px;height:21px;background:#000;"></div>
<div style="left:60px;top:500px;width:1px;height:21px;background:#000;"></div>
<div style="left:60px;top:500px;width:72px;height:1px;background:#000;"></div>
<div style="left:60px;top:520px;width:72px;height:1px;background:#000;"></div>
<div style="left:60px;top:500px;width:1px;height:21px;background:#000;"></div>
<div style="left:131px;top:500px;width:1px;height:21px;background:#000;"></div>
<div style="left:131px;top:500px;width:72px;height:1px;background:#000;"></div>
<div style="left:131px;top:520px;width:72px;height:1px;background:#000;"></div>
<div style="left:131px;top:500px;width:1px;height:21px;background:#000;"></div>
<div style="left:202px;top:500px;width:1px;height:21px;background:#000;"></div>
<div style="left:202px;top:500px;width:68px;height:1px;background:#000;"></div>
<div style="left:202px;top:520px;width:68px;height:1px;background:#000;"></div>
<div style="left:202px;top:500px;width:1px;height:21px;background:#000;"></div>
<div style="left:269px;top:500px;width:1px;height:21px;background:#000;"></div>
<div style="left:269px;top:500px;width:68px;height:1px;background:#000;"></div>
<div style="left:269px;top:520px;width:68px;height:1px;background:#000;"></div>
<div style="left:269px;top:500px;width:1px;height:21px;background:#000;"></div>
<div style="left:336px;top:500px;width:1px;height:21px;background:#000;"></div>
<div style="left:336px;top:500px;width:52px;height:1px;background:#000;"></div>
<div style="left:336px;top:520px;width:52px;height:1px;background:#000;"></div>
<div style="left:336px;top:500px;width:1px;height:21px;background:#000;"></div>
<div style="left:387px;top:500px;width:1px;height:21px;background:#000;"></div>
<div style="left:387px;top:500px;width:78px;height:1px;background:#000;"></div>
<div style="left:387px;top:520px;width:78px;height:1px;background:#000;"></div>
<div style="left:387px;top:500px;width:1px;height:21px;background:#000;"></div>
<div style="left:464px;top:500px;width:1px;height:21px;background:#000;"></div>
<div style="left:25px;top:520px;width:36px;height:1px;background:#000;"></div>
<div style="left:25px;top:540px;width:36px;height:1px;background:#000;"></div>
<div style="left:25px;top:520px;width:1px;height:21px;background:#000;"></div>
<div style="left:60px;top:520px;width:1px;height:21px;background:#000;"></div>
<div style="left:60px;top:520px;width:72px;height:1px;background:#000;"></div>
<div style="left:60px;top:540px;width:72px;height:1px;background:#000;"></div>
<div style="left:60px;top:520px;width:1px;height:21px;background:#000;"></div>
<div style="left:131px;top:520px;width:1px;height:21px;background:#000;"></div>
<div style="left:131px;top:520px;width:72px;height:1px;background:#000;"></div>
<div style="left:131px;top:540px;width:72px;height:1px;background:#000;"></div>
<div style="left:131px;top:520px;width:1px;height:21px;background:#000;"></div>
<div style="left:202px;top:520px;width:1px;height:21px;background:#000;"></div>
<div style="left:202px;top:520px;width:68px;height:1px;background:#000;"></div>
<div style="left:202px;top:540px;width:68px;height:1px;background:#000;"></div>
<div style="left:202px;top:520px;width:1px;height:21px;background:#000;"></div>
<div style="left:269px;top:520px;width:1px;height:21px;background:#000;"></div>
<div style="left:269px;top:520px;width:68px;height:1px;background:#000;"></div>
<div style="left:269px;top:540px;width:68px;height:1px;background:#000;"></div>
<div style="left:269px;top:520px;width:1px;height:21px;background:#000;"></div>
<div style="left:336px;top:520px;width:1px;height:21px;background:#000;"></div>
<div style="left:336px;top:520px;width:52px;height:1px;background:#000;"></div>
<div style="left:336px;top:540px;width:52px;height:1px;background:#000;"></div>
<div style="left:336px;top:520px;width:1px;height:21px;background:#000;"></div>
<div style="left:387px;top:520px;width:1px;height:21px;background:#000;"></div>
<div style="left:387px;top:520px;width:78px;height:1px;background:#000;"></div>
<div style="left:387px;top:540px;width:78px;height:1px;background:#000;"></div>
<div style="left:387px;top:520px;width:1px;height:21px;background:#000;"></div>
<div style="left:464px;top:520px;width:1px;height:21px;background:#000;"></div>
<div style="left:25px;top:540px;width:36px;height:1px;background:#000;"></div>
<div style="left:25px;top:560px;width:36px;height:1px;background:#000;"></div>
<div style="left:25px;top:540px;width:1px;height:21px;background:#000;"></div>
<div style="left:60px;top:540px;width:1px;height:21px;background:#000;"></div>
<div style="left:60px;top:540px;width:72px;height:1px;background:#000;"></div>
<div style="left:60px;top:560px;width:72px;height:1px;background:#000;"></div>
<div style="left:60px;top:540px;width:1px;height:21px;background:#000;"></div>
<div style="left:131px;top:540px;width:1px;height:21px;background:#000;"></div>
<div style="left:131px;top:540px;width:72px;height:1px;background:#000;"></div>
<div style="left:131px;top:560px;width:72px;height:1px;background:#000;"></div>
<div style="left:131px;top:540px;width:1px;height:21px;background:#000;"></div>
<div style="left:202px;top:540px;width:1px;height:21px;background:#000;"></div>
<div style="left:202px;top:540px;width:68px;height:1px;background:#000;"></div>
<div style="left:202px;top:560px;width:68px;height:1px;background:#000;"></div>
<div style="left:202px;top:540px;width:1px;height:21px;background:#000;"></div>
<div style="left:269px;top:540px;width:1px;height:21px;background:#000;"></div>
<div style="left:269px;top:540px;width:68px;height:1px;background:#000;"></div>
<div style="left:269px;top:560px;width:68px;height:1px;background:#000;"></div>
<div style="left:269px;top:540px;width:1px;height:21px;background:#000;"></div>
<div style="left:336px;top:540px;width:1px;height:21px;background:#000;"></div>
<div style="left:336px;top:540px;width:52px;height:1px;background:#000;"></div>
<div style="left:336px;top:560px;width:52px;height:1px;background:#000;"></div>
<div style="left:336px;top:540px;width:1px;height:21px;background:#000;"></div>
<div style="left:387px;top:540px;width:1px;height:21px;background:#000;"></div>
<div style="left:387px;top:540px;width:78px;height:1px;background:#000;"></div>
<div style="left:387px;top:560px;width:78px;height:1px;background:#000;"></div>
<div style="left:387px;top:540px;width:1px;height:21px;background:#000;"></div>
<div style="left:464px;top:540px;width:1px;height:21px;background:#000;"></div>
<div style="left:25px;top:560px;width:36px;height:1px;background:#000;"></div>
<div style="left:25px;top:580px;width:36px;height:1px;background:#000;"></div>
<div style="left:25px;top:560px;width:1px;height:21px;background:#000;"></div>
<div style="left:60px;top:560px;width:1px;height:21px;background:#000;"></div>
<div style="left:60px;top:560px;width:72px;height:1px;background:#000;"></div>
<div style="left:60px;top:580px;width:72px;height:1px;background:#000;"></div>
<div style="left:60px;top:560px;width:1px;height:21px;background:#000;"></div>
<div style="left:131px;top:560px;width:1px;height:21px;background:#000;"></div>
<div style="left:131px;top:560px;width:72px;height:1px;background:#000;"></div>
<div style="left:131px;top:580px;width:72px;height:1px;background:#000;"></div>
<div style="left:131px;top:560px;width:1px;height:21px;background:#000;"></div>
<div style="left:202px;top:560px;width:1px;height:21px;background:#000;"></div>
<div style="left:202px;top:560px;width:68px;height:1px;background:#000;"></div>
<div style="left:202px;top:580px;width:68px;height:1px;background:#000;"></div>
<div style="left:202px;top:560px;width:1px;height:21px;background:#000;"></div>
<div style="left:269px;top:560px;width:1px;height:21px;background:#000;"></div>
<div style="left:269px;top:560px;width:68px;height:1px;background:#000;"></div>
<div style="left:269px;top:580px;width:68px;height:1px;background:#000;"></div>
<div style="left:269px;top:560px;width:1px;height:21px;background:#000;"></div>
<div style="left:336px;top:560px;width:1px;height:21px;background:#000;"></div>
<div style="left:336px;top:560px;width:52px;height:1px;background:#000;"></div>
<div style="left:336px;top:580px;width:52px;height:1px;background:#000;"></div>
<div style="left:336px;top:560px;width:1px;height:21px;background:#000;"></div>
<div style="left:387px;top:560px;width:1px;height:21px;background:#000;"></div>
<div style="left:387px;top:560px;width:78px;height:1px;background:#000;"></div>
<div style="left:387px;top:580px;width:78px;height:1px;background:#000;"></div>
<div style="left:387px;top:560px;width:1px;height:21px;background:#000;"></div>
<div style="left:464px;top:560px;width:1px;height:21px;background:#000;"></div>
<div style="left:25px;top:580px;width:36px;height:1px;background:#000;"></div>
<div style="left:25px;top:600px;width:36px;height:1px;background:#000;"></div>
<div style="left:25px;top:580px;width:1px;height:21px;background:#000;"></div>
<div style="left:60px;top:580px;width:1px;height:21px;background:#000;"></div>
<div style="left:60px;top:580px;width:72px;height:1px;background:#000;"></div>
<div style="left:60px;top:600px;width:72px;height:1px;background:#000;"></div>
<div style="left:60px;top:580px;width:1px;height:21px;background:#000;"></div>
<div style="left:131px;top:580px;width:1px;height:21px;background:#000;"></div>
<div style="left:131px;top:580px;width:72px;height:1px;background:#000;"></div>
<div style="left:131px;top:600px;width:72px;height:1px;background:#000;"></div>
<div style="left:131px;top:580px;width:1px;height:21px;background:#000;"></div>
<div style="left:202px;top:580px;width:1px;height:21px;background:#000;"></div>
<div style="left:202px;top:580px;width:68px;height:1px;background:#000;"></div>
<div style="left:202px;top:600px;width:68px;height:1px;background:#000;"></div>
<div style="left:202px;top:580px;width:1px;height:21px;background:#000;"></div>
<div style="left:269px;top:580px;width:1px;height:21px;background:#000;"></div>
<div style="left:269px;top:580px;width:68px;height:1px;background:#000;"></div>
<div style="left:269px;top:600px;width:68px;height:1px;background:#000;"></div>
<div style="left:269px;top:580px;width:1px;height:21px;background:#000;"></div>
<div style="left:336px;top:580px;width:1px;height:21px;background:#000;"></div>
<div style="left:336px;top:580px;width:52px;height:1px;background:#000;"></div>
<div style="left:336px;top:600px;width:52px;height:1px;background:#000;"></div>
<div style="left:336px;top:580px;width:1px;height:21px;background:#000;"></div>
<div style="left:387px;top:580px;width:1px;height:21px;background:#000;"></div>
<div style="left:387px;top:580px;width:78px;height:1px;background:#000;"></div>
<div style="left:387px;top:600px;width:78px;height:1px;background:#000;"></div>
<div style="left:387px;top:580px;width:1px;height:21px;background:#000;"></div>
<div style="left:464px;top:580px;width:1px;height:21px;background:#000;"></div>
<div class="t" style="left:89.72px;top:62.70px;font-size:13px;line-height:15px;color:#0a5a14;font-weight:bold;font-style:normal;transform:scaleX(1.0325);">Неделя</div>
<div class="t" style="left:34.64px;top:83.30px;font-size:13px;line-height:15px;color:#0a5a14;font-weight:bold;font-style:normal;transform:scaleX(1.1308);">№</div>
<div class="t" style="left:72.86px;top:83.30px;font-size:13px;line-height:15px;color:#0a5a14;font-weight:bold;font-style:normal;transform:scaleX(0.9923);">Начало</div>
<div class="t" style="left:132.30px;top:83.30px;font-size:13px;line-height:15px;color:#0a5a14;font-weight:bold;font-style:normal;transform:scaleX(0.9935);">Окончание</div>
<div class="t" style="left:217.90px;top:72.60px;font-size:13px;line-height:15px;color:#0a5a14;font-weight:bold;font-style:normal;transform:scaleX(0.9960);">Товар</div>
<div class="t" style="left:286.61px;top:72.60px;font-size:13px;line-height:15px;color:#0a5a14;font-weight:bold;font-style:normal;transform:scaleX(1.0496);">Цена</div>
<div class="t" style="left:339.53px;top:72.60px;font-size:13px;line-height:15px;color:#0a5a14;font-weight:bold;font-style:normal;transform:scaleX(1.0294);">Кол-во</div>
<div class="t" style="left:411.73px;top:72.60px;font-size:13px;line-height:15px;color:#0a5a14;font-weight:bold;font-style:normal;transform:scaleX(1.0234);">Итог</div>
<div class="t" style="left:29.66px;top:104.00px;font-size:13px;line-height:15px;color:#000;font-weight:normal;font-style:normal;transform:scaleX(0.9326);">Н-01</div>
<div class="t" style="left:66.18px;top:104.00px;font-size:13px;line-height:15px;color:#dfeeff;font-weight:normal;font-style:normal;transform:scaleX(0.9624);-webkit-text-stroke:0;">01.10.2018</div>
<div class="t" style="left:137.28px;top:104.00px;font-size:13px;line-height:15px;color:#dfeeff;font-weight:normal;font-style:normal;transform:scaleX(0.9624);-webkit-text-stroke:0;">07.10.2018</div>
<div class="t" style="left:204.94px;top:104.00px;font-size:13px;line-height:15px;color:#000;font-weight:normal;font-style:normal;transform:scaleX(1.0405);">Товар</div>
<div class="t" style="left:244.72px;top:104.00px;font-size:13px;line-height:15px;color:#000;font-weight:bold;font-style:normal;transform:scaleX(0.9366);">АА</div>
<svg style="position:absolute;left:319.90px;top:106.00px;overflow:visible" width="9.40" height="11.00"><path d="M2.90 1.00 V10.00 M1.30 1.60 H5.40 A2.00 2.00 0 0 1 5.40 5.60 H1.30 M1.00 7.60 H6.00" stroke="#000" stroke-width="1.2" fill="none"/></svg>
<div class="t" style="left:278.87px;top:104.00px;font-size:13px;line-height:15px;color:#000;font-weight:normal;font-style:normal;transform:scaleX(0.9600);">894,00</div>
<div class="t" style="left:356.00px;top:104.00px;font-size:13px;line-height:15px;color:#000;font-weight:normal;font-style:normal;transform:scaleX(0.9700);">3 шт.</div>
<svg style="position:absolute;left:447.70px;top:106.00px;overflow:visible" width="9.40" height="11.00"><path d="M2.90 1.00 V10.00 M1.30 1.60 H5.40 A2.00 2.00 0 0 1 5.40 5.60 H1.30 M1.00 7.60 H6.00" stroke="#ea8530" stroke-width="1.75" fill="none"/></svg>
<div class="t" style="left:396.25px;top:104.00px;font-size:13px;line-height:15px;color:#ea8530;font-weight:bold;font-style:normal;transform:scaleX(0.9500);">2 682,00</div>
<div class="t" style="left:29.66px;top:124.00px;font-size:13px;line-height:15px;color:#000;font-weight:normal;font-style:normal;transform:scaleX(0.9326);">Н-01</div>
<div class="t" style="left:66.18px;top:124.00px;font-size:13px;line-height:15px;color:#dfeeff;font-weight:normal;font-style:normal;transform:scaleX(0.9624);-webkit-text-stroke:0;">01.10.2018</div>
<div class="t" style="left:137.28px;top:124.00px;font-size:13px;line-height:15px;color:#dfeeff;font-weight:normal;font-style:normal;transform:scaleX(0.9624);-webkit-text-stroke:0;">07.10.2018</div>
<div class="t" style="left:204.95px;top:124.00px;font-size:13px;line-height:15px;color:#000;font-weight:normal;font-style:normal;transform:scaleX(0.9900);">Товар ББ</div>
<svg style="position:absolute;left:319.90px;top:126.00px;overflow:visible" width="9.40" height="11.00"><path d="M2.90 1.00 V10.00 M1.30 1.60 H5.40 A2.00 2.00 0 0 1 5.40 5.60 H1.30 M1.00 7.60 H6.00" stroke="#000" stroke-width="1.2" fill="none"/></svg>
<div class="t" style="left:278.87px;top:124.00px;font-size:13px;line-height:15px;color:#000;font-weight:normal;font-style:normal;transform:scaleX(0.9600);">596,00</div>
<div class="t" style="left:356.00px;top:124.00px;font-size:13px;line-height:15px;color:#000;font-weight:normal;font-style:normal;transform:scaleX(0.9700);">6 шт.</div>
<svg style="position:absolute;left:447.70px;top:126.00px;overflow:visible" width="9.40" height="11.00"><path d="M2.90 1.00 V10.00 M1.30 1.60 H5.40 A2.00 2.00 0 0 1 5.40 5.60 H1.30 M1.00 7.60 H6.00" stroke="#ea8530" stroke-width="1.75" fill="none"/></svg>
<div class="t" style="left:396.25px;top:124.00px;font-size:13px;line-height:15px;color:#ea8530;font-weight:bold;font-style:normal;transform:scaleX(0.9500);">3 576,00</div>
<div class="t" style="left:29.66px;top:144.00px;font-size:13px;line-height:15px;color:#000;font-weight:normal;font-style:normal;transform:scaleX(0.9326);">Н-01</div>
<div class="t" style="left:66.18px;top:144.00px;font-size:13px;line-height:15px;color:#dfeeff;font-weight:normal;font-style:normal;transform:scaleX(0.9624);-webkit-text-stroke:0;">01.10.2018</div>
<div class="t" style="left:137.28px;top:144.00px;font-size:13px;line-height:15px;color:#dfeeff;font-weight:normal;font-style:normal;transform:scaleX(0.9624);-webkit-text-stroke:0;">07.10.2018</div>
<div class="t" style="left:204.95px;top:144.00px;font-size:13px;line-height:15px;color:#000;font-weight:normal;font-style:normal;transform:scaleX(0.9900);">Товар ВВ</div>
<svg style="position:absolute;left:319.90px;top:146.00px;overflow:visible" width="9.40" height="11.00"><path d="M2.90 1.00 V10.00 M1.30 1.60 H5.40 A2.00 2.00 0 0 1 5.40 5.60 H1.30 M1.00 7.60 H6.00" stroke="#000" stroke-width="1.2" fill="none"/></svg>
<div class="t" style="left:278.87px;top:144.00px;font-size:13px;line-height:15px;color:#000;font-weight:normal;font-style:normal;transform:scaleX(0.9600);">738,00</div>
<div class="t" style="left:356.00px;top:144.00px;font-size:13px;line-height:15px;color:#000;font-weight:normal;font-style:normal;transform:scaleX(0.9700);">6 шт.</div>
<svg style="position:absolute;left:447.70px;top:146.00px;overflow:visible" width="9.40" height="11.00"><path d="M2.90 1.00 V10.00 M1.30 1.60 H5.40 A2.00 2.00 0 0 1 5.40 5.60 H1.30 M1.00 7.60 H6.00" stroke="#ea8530" stroke-width="1.75" fill="none"/></svg>
<div class="t" style="left:396.25px;top:144.00px;font-size:13px;line-height:15px;color:#ea8530;font-weight:bold;font-style:normal;transform:scaleX(0.9500);">4 428,00</div>
<div class="t" style="left:29.66px;top:164.00px;font-size:13px;line-height:15px;color:#000;font-weight:normal;font-style:normal;transform:scaleX(0.9326);">Н-01</div>
<div class="t" style="left:66.18px;top:164.00px;font-size:13px;line-height:15px;color:#dfeeff;font-weight:normal;font-style:normal;transform:scaleX(0.9624);-webkit-text-stroke:0;">01.10.2018</div>
<div class="t" style="left:137.28px;top:164.00px;font-size:13px;line-height:15px;color:#dfeeff;font-weight:normal;font-style:normal;transform:scaleX(0.9624);-webkit-text-stroke:0;">07.10.2018</div>
<div class="t" style="left:204.95px;top:164.00px;font-size:13px;line-height:15px;color:#000;font-weight:normal;font-style:normal;transform:scaleX(0.9900);">Товар ГГ</div>
<svg style="position:absolute;left:319.90px;top:166.00px;overflow:visible" width="9.40" height="11.00"><path d="M2.90 1.00 V10.00 M1.30 1.60 H5.40 A2.00 2.00 0 0 1 5.40 5.60 H1.30 M1.00 7.60 H6.00" stroke="#000" stroke-width="1.2" fill="none"/></svg>
<div class="t" style="left:278.87px;top:164.00px;font-size:13px;line-height:15px;color:#000;font-weight:normal;font-style:normal;transform:scaleX(0.9600);">364,00</div>
<div class="t" style="left:356.00px;top:164.00px;font-size:13px;line-height:15px;color:#000;font-weight:normal;font-style:normal;transform:scaleX(0.9700);">8 шт.</div>
<svg style="position:absolute;left:447.70px;top:166.00px;overflow:visible" width="9.40" height="11.00"><path d="M2.90 1.00 V10.00 M1.30 1.60 H5.40 A2.00 2.00 0 0 1 5.40 5.60 H1.30 M1.00 7.60 H6.00" stroke="#ea8530" stroke-width="1.75" fill="none"/></svg>
<div class="t" style="left:396.25px;top:164.00px;font-size:13px;line-height:15px;color:#ea8530;font-weight:bold;font-style:normal;transform:scaleX(0.9500);">2 912,00</div>
<div class="t" style="left:29.66px;top:184.00px;font-size:13px;line-height:15px;color:#000;font-weight:normal;font-style:normal;transform:scaleX(0.9326);">Н-01</div>
<div class="t" style="left:66.18px;top:184.00px;font-size:13px;line-height:15px;color:#dfeeff;font-weight:normal;font-style:normal;transform:scaleX(0.9624);-webkit-text-stroke:0;">01.10.2018</div>
<div class="t" style="left:137.28px;top:184.00px;font-size:13px;line-height:15px;color:#dfeeff;font-weight:normal;font-style:normal;transform:scaleX(0.9624);-webkit-text-stroke:0;">07.10.2018</div>
<div class="t" style="left:204.95px;top:184.00px;font-size:13px;line-height:15px;color:#000;font-weight:normal;font-style:normal;transform:scaleX(0.9900);">Товар ДД</div>
<svg style="position:absolute;left:319.90px;top:186.00px;overflow:visible" width="9.40" height="11.00"><path d="M2.90 1.00 V10.00 M1.30 1.60 H5.40 A2.00 2.00 0 0 1 5.40 5.60 H1.30 M1.00 7.60 H6.00" stroke="#000" stroke-width="1.2" fill="none"/></svg>
<div class="t" style="left:278.87px;top:184.00px;font-size:13px;line-height:15px;color:#000;font-weight:normal;font-style:normal;transform:scaleX(0.9600);">286,00</div>
<div class="t" style="left:356.00px;top:184.00px;font-size:13px;line-height:15px;color:#000;font-weight:normal;font-style:normal;transform:scaleX(0.9700);">0 шт.</div>
<div class="t" style="left:428.28px;top:184.00px;font-size:13px;line-height:15px;color:#ea8530;font-weight:bold;font-style:normal;transform:scaleX(0.8358);">-</div>
<svg style="position:absolute;left:447.70px;top:186.00px;overflow:visible" width="9.40" height="11.00"><path d="M2.90 1.00 V10.00 M1.30 1.60 H5.40 A2.00 2.00 0 0 1 5.40 5.60 H1.30 M1.00 7.60 H6.00" stroke="#ea8530" stroke-width="1.75" fill="none"/></svg>
<div class="t" style="left:29.66px;top:204.00px;font-size:13px;line-height:15px;color:#000;font-weight:normal;font-style:normal;transform:scaleX(0.9326);">Н-02</div>
<div class="t" style="left:66.18px;top:204.00px;font-size:13px;line-height:15px;color:#dfeeff;font-weight:normal;font-style:normal;transform:scaleX(0.9624);-webkit-text-stroke:0;">08.10.2018</div>
<div class="t" style="left:137.28px;top:204.00px;font-size:13px;line-height:15px;color:#dfeeff;font-weight:normal;font-style:normal;transform:scaleX(0.9624);-webkit-text-stroke:0;">14.10.2018</div>
<div class="t" style="left:204.94px;top:204.00px;font-size:13px;line-height:15px;color:#000;font-weight:normal;font-style:normal;transform:scaleX(1.0405);">Товар</div>
<div class="t" style="left:244.72px;top:204.00px;font-size:13px;line-height:15px;color:#000;font-weight:bold;font-style:normal;transform:scaleX(0.9366);">АА</div>
<svg style="position:absolute;left:319.90px;top:206.00px;overflow:visible" width="9.40" height="11.00"><path d="M2.90 1.00 V10.00 M1.30 1.60 H5.40 A2.00 2.00 0 0 1 5.40 5.60 H1.30 M1.00 7.60 H6.00" stroke="#000" stroke-width="1.2" fill="none"/></svg>
<div class="t" style="left:278.87px;top:204.00px;font-size:13px;line-height:15px;color:#000;font-weight:normal;font-style:normal;transform:scaleX(0.9600);">894,00</div>
<div class="t" style="left:356.00px;top:204.00px;font-size:13px;line-height:15px;color:#000;font-weight:normal;font-style:normal;transform:scaleX(0.9700);">5 шт.</div>
<svg style="position:absolute;left:447.70px;top:206.00px;overflow:visible" width="9.40" height="11.00"><path d="M2.90 1.00 V10.00 M1.30 1.60 H5.40 A2.00 2.00 0 0 1 5.40 5.60 H1.30 M1.00 7.60 H6.00" stroke="#ea8530" stroke-width="1.75" fill="none"/></svg>
<div class="t" style="left:396.25px;top:204.00px;font-size:13px;line-height:15px;color:#ea8530;font-weight:bold;font-style:normal;transform:scaleX(0.9500);">4 470,00</div>
<div class="t" style="left:29.66px;top:224.00px;font-size:13px;line-height:15px;color:#000;font-weight:normal;font-style:normal;transform:scaleX(0.9326);">Н-02</div>
<div class="t" style="left:66.18px;top:224.00px;font-size:13px;line-height:15px;color:#dfeeff;font-weight:normal;font-style:normal;transform:scaleX(0.9624);-webkit-text-stroke:0;">08.10.2018</div>
<div class="t" style="left:137.28px;top:224.00px;font-size:13px;line-height:15px;color:#dfeeff;font-weight:normal;font-style:normal;transform:scaleX(0.9624);-webkit-text-stroke:0;">14.10.2018</div>
<div class="t" style="left:204.95px;top:224.00px;font-size:13px;line-height:15px;color:#000;font-weight:normal;font-style:normal;transform:scaleX(0.9900);">Товар ББ</div>
<svg style="position:absolute;left:319.90px;top:226.00px;overflow:visible" width="9.40" height="11.00"><path d="M2.90 1.00 V10.00 M1.30 1.60 H5.40 A2.00 2.00 0 0 1 5.40 5.60 H1.30 M1.00 7.60 H6.00" stroke="#000" stroke-width="1.2" fill="none"/></svg>
<div class="t" style="left:278.87px;top:224.00px;font-size:13px;line-height:15px;color:#000;font-weight:normal;font-style:normal;transform:scaleX(0.9600);">596,00</div>
<div class="t" style="left:356.00px;top:224.00px;font-size:13px;line-height:15px;color:#000;font-weight:normal;font-style:normal;transform:scaleX(0.9700);">3 шт.</div>
<svg style="position:absolute;left:447.70px;top:226.00px;overflow:visible" width="9.40" height="11.00"><path d="M2.90 1.00 V10.00 M1.30 1.60 H5.40 A2.00 2.00 0 0 1 5.40 5.60 H1.30 M1.00 7.60 H6.00" stroke="#ea8530" stroke-width="1.75" fill="none"/></svg>
<div class="t" style="left:396.25px;top:224.00px;font-size:13px;line-height:15px;color:#ea8530;font-weight:bold;font-style:normal;transform:scaleX(0.9500);">1 788,00</div>
<div class="t" style="left:29.66px;top:244.00px;font-size:13px;line-height:15px;color:#000;font-weight:normal;font-style:normal;transform:scaleX(0.9326);">Н-02</div>
<div class="t" style="left:66.18px;top:244.00px;font-size:13px;line-height:15px;color:#dfeeff;font-weight:normal;font-style:normal;transform:scaleX(0.9624);-webkit-text-stroke:0;">08.10.2018</div>
<div class="t" style="left:137.28px;top:244.00px;font-size:13px;line-height:15px;color:#dfeeff;font-weight:normal;font-style:normal;transform:scaleX(0.9624);-webkit-text-stroke:0;">14.10.2018</div>
<div class="t" style="left:204.95px;top:244.00px;font-size:13px;line-height:15px;color:#000;font-weight:normal;font-style:normal;transform:scaleX(0.9900);">Товар ВВ</div>
<svg style="position:absolute;left:319.90px;top:246.00px;overflow:visible" width="9.40" height="11.00"><path d="M2.90 1.00 V10.00 M1.30 1.60 H5.40 A2.00 2.00 0 0 1 5.40 5.60 H1.30 M1.00 7.60 H6.00" stroke="#000" stroke-width="1.2" fill="none"/></svg>
<div class="t" style="left:278.87px;top:244.00px;font-size:13px;line-height:15px;color:#000;font-weight:normal;font-style:normal;transform:scaleX(0.9600);">738,00</div>
<div class="t" style="left:356.00px;top:244.00px;font-size:13px;line-height:15px;color:#000;font-weight:normal;font-style:normal;transform:scaleX(0.9700);">3 шт.</div>
<svg style="position:absolute;left:447.70px;top:246.00px;overflow:visible" width="9.40" height="11.00"><path d="M2.90 1.00 V10.00 M1.30 1.60 H5.40 A2.00 2.00 0 0 1 5.40 5.60 H1.30 M1.00 7.60 H6.00" stroke="#ea8530" stroke-width="1.75" fill="none"/></svg>
<div class="t" style="left:396.25px;top:244.00px;font-size:13px;line-height:15px;color:#ea8530;font-weight:bold;font-style:normal;transform:scaleX(0.9500);">2 214,00</div>
<div class="t" style="left:29.66px;top:264.00px;font-size:13px;line-height:15px;color:#000;font-weight:normal;font-style:normal;transform:scaleX(0.9326);">Н-02</div>
<div class="t" style="left:66.18px;top:264.00px;font-size:13px;line-height:15px;color:#dfeeff;font-weight:normal;font-style:normal;transform:scaleX(0.9624);-webkit-text-stroke:0;">08.10.2018</div>
<div class="t" style="left:137.28px;top:264.00px;font-size:13px;line-height:15px;color:#dfeeff;font-weight:normal;font-style:normal;transform:scaleX(0.9624);-webkit-text-stroke:0;">14.10.2018</div>
<div class="t" style="left:204.95px;top:264.00px;font-size:13px;line-height:15px;color:#000;font-weight:normal;font-style:normal;transform:scaleX(0.9900);">Товар ГГ</div>
<svg style="position:absolute;left:319.90px;top:266.00px;overflow:visible" width="9.40" height="11.00"><path d="M2.90 1.00 V10.00 M1.30 1.60 H5.40 A2.00 2.00 0 0 1 5.40 5.60 H1.30 M1.00 7.60 H6.00" stroke="#000" stroke-width="1.2" fill="none"/></svg>
<div class="t" style="left:278.87px;top:264.00px;font-size:13px;line-height:15px;color:#000;font-weight:normal;font-style:normal;transform:scaleX(0.9600);">364,00</div>
<div class="t" style="left:356.00px;top:264.00px;font-size:13px;line-height:15px;color:#000;font-weight:normal;font-style:normal;transform:scaleX(0.9700);">9 шт.</div>
<svg style="position:absolute;left:447.70px;top:266.00px;overflow:visible" width="9.40" height="11.00"><path d="M2.90 1.00 V10.00 M1.30 1.60 H5.40 A2.00 2.00 0 0 1 5.40 5.60 H1.30 M1.00 7.60 H6.00" stroke="#ea8530" stroke-width="1.75" fill="none"/></svg>
<div class="t" style="left:396.25px;top:264.00px;font-size:13px;line-height:15px;color:#ea8530;font-weight:bold;font-style:normal;transform:scaleX(0.9500);">3 276,00</div>
<div class="t" style="left:29.66px;top:284.00px;font-size:13px;line-height:15px;color:#000;font-weight:normal;font-style:normal;transform:scaleX(0.9326);">Н-02</div>
<div class="t" style="left:66.18px;top:284.00px;font-size:13px;line-height:15px;color:#dfeeff;font-weight:normal;font-style:normal;transform:scaleX(0.9624);-webkit-text-stroke:0;">08.10.2018</div>
<div class="t" style="left:137.28px;top:284.00px;font-size:13px;line-height:15px;color:#dfeeff;font-weight:normal;font-style:normal;transform:scaleX(0.9624);-webkit-text-stroke:0;">14.10.2018</div>
<div class="t" style="left:204.95px;top:284.00px;font-size:13px;line-height:15px;color:#000;font-weight:normal;font-style:normal;transform:scaleX(0.9900);">Товар ДД</div>
<svg style="position:absolute;left:319.90px;top:286.00px;overflow:visible" width="9.40" height="11.00"><path d="M2.90 1.00 V10.00 M1.30 1.60 H5.40 A2.00 2.00 0 0 1 5.40 5.60 H1.30 M1.00 7.60 H6.00" stroke="#000" stroke-width="1.2" fill="none"/></svg>
<div class="t" style="left:278.87px;top:284.00px;font-size:13px;line-height:15px;color:#000;font-weight:normal;font-style:normal;transform:scaleX(0.9600);">286,00</div>
<div class="t" style="left:356.00px;top:284.00px;font-size:13px;line-height:15px;color:#000;font-weight:normal;font-style:normal;transform:scaleX(0.9700);">8 шт.</div>
<svg style="position:absolute;left:447.70px;top:286.00px;overflow:visible" width="9.40" height="11.00"><path d="M2.90 1.00 V10.00 M1.30 1.60 H5.40 A2.00 2.00 0 0 1 5.40 5.60 H1.30 M1.00 7.60 H6.00" stroke="#ea8530" stroke-width="1.75" fill="none"/></svg>
<div class="t" style="left:396.25px;top:284.00px;font-size:13px;line-height:15px;color:#ea8530;font-weight:bold;font-style:normal;transform:scaleX(0.9500);">2 288,00</div>
<div class="t" style="left:29.62px;top:304.00px;font-size:13px;line-height:15px;color:#000;font-weight:normal;font-style:normal;transform:scaleX(0.9326);">Н-03</div>
<div class="t" style="left:66.18px;top:304.00px;font-size:13px;line-height:15px;color:#dfeeff;font-weight:normal;font-style:normal;transform:scaleX(0.9624);-webkit-text-stroke:0;">15.10.2018</div>
<div class="t" style="left:137.28px;top:304.00px;font-size:13px;line-height:15px;color:#dfeeff;font-weight:normal;font-style:normal;transform:scaleX(0.9624);-webkit-text-stroke:0;">21.10.2018</div>
<div class="t" style="left:204.94px;top:304.00px;font-size:13px;line-height:15px;color:#000;font-weight:normal;font-style:normal;transform:scaleX(1.0405);">Товар</div>
<div class="t" style="left:244.72px;top:304.00px;font-size:13px;line-height:15px;color:#000;font-weight:bold;font-style:normal;transform:scaleX(0.9366);">АА</div>
<svg style="position:absolute;left:319.90px;top:306.00px;overflow:visible" width="9.40" height="11.00"><path d="M2.90 1.00 V10.00 M1.30 1.60 H5.40 A2.00 2.00 0 0 1 5.40 5.60 H1.30 M1.00 7.60 H6.00" stroke="#000" stroke-width="1.2" fill="none"/></svg>
<div class="t" style="left:278.87px;top:304.00px;font-size:13px;line-height:15px;color:#000;font-weight:normal;font-style:normal;transform:scaleX(0.9600);">894,00</div>
<div class="t" style="left:349.01px;top:304.00px;font-size:13px;line-height:15px;color:#000;font-weight:normal;font-style:normal;transform:scaleX(0.9700);">10 шт.</div>
<svg style="position:absolute;left:447.70px;top:306.00px;overflow:visible" width="9.40" height="11.00"><path d="M2.90 1.00 V10.00 M1.30 1.60 H5.40 A2.00 2.00 0 0 1 5.40 5.60 H1.30 M1.00 7.60 H6.00" stroke="#ea8530" stroke-width="1.75" fill="none"/></svg>
<div class="t" style="left:396.25px;top:304.00px;font-size:13px;line-height:15px;color:#ea8530;font-weight:bold;font-style:normal;transform:scaleX(0.9500);">8 940,00</div>
<div class="t" style="left:29.62px;top:324.00px;font-size:13px;line-height:15px;color:#000;font-weight:normal;font-style:normal;transform:scaleX(0.9326);">Н-03</div>
<div class="t" style="left:66.18px;top:324.00px;font-size:13px;line-height:15px;color:#dfeeff;font-weight:normal;font-style:normal;transform:scaleX(0.9624);-webkit-text-stroke:0;">15.10.2018</div>
<div class="t" style="left:137.28px;top:324.00px;font-size:13px;line-height:15px;color:#dfeeff;font-weight:normal;font-style:normal;transform:scaleX(0.9624);-webkit-text-stroke:0;">21.10.2018</div>
<div class="t" style="left:204.95px;top:324.00px;font-size:13px;line-height:15px;color:#000;font-weight:normal;font-style:normal;transform:scaleX(0.9900);">Товар ББ</div>
<svg style="position:absolute;left:319.90px;top:326.00px;overflow:visible" width="9.40" height="11.00"><path d="M2.90 1.00 V10.00 M1.30 1.60 H5.40 A2.00 2.00 0 0 1 5.40 5.60 H1.30 M1.00 7.60 H6.00" stroke="#000" stroke-width="1.2" fill="none"/></svg>
<div class="t" style="left:278.87px;top:324.00px;font-size:13px;line-height:15px;color:#000;font-weight:normal;font-style:normal;transform:scaleX(0.9600);">596,00</div>
<div class="t" style="left:356.00px;top:324.00px;font-size:13px;line-height:15px;color:#000;font-weight:normal;font-style:normal;transform:scaleX(0.9700);">1 шт.</div>
<svg style="position:absolute;left:447.70px;top:326.00px;overflow:visible" width="9.40" height="11.00"><path d="M2.90 1.00 V10.00 M1.30 1.60 H5.40 A2.00 2.00 0 0 1 5.40 5.60 H1.30 M1.00 7.60 H6.00" stroke="#ea8530" stroke-width="1.75" fill="none"/></svg>
<div class="t" style="left:406.51px;top:324.00px;font-size:13px;line-height:15px;color:#ea8530;font-weight:bold;font-style:normal;transform:scaleX(0.9500);">596,00</div>
<div class="t" style="left:29.62px;top:344.00px;font-size:13px;line-height:15px;color:#000;font-weight:normal;font-style:normal;transform:scaleX(0.9326);">Н-03</div>
<div class="t" style="left:66.18px;top:344.00px;font-size:13px;line-height:15px;color:#dfeeff;font-weight:normal;font-style:normal;transform:scaleX(0.9624);-webkit-text-stroke:0;">15.10.2018</div>
<div class="t" style="left:137.28px;top:344.00px;font-size:13px;line-height:15px;color:#dfeeff;font-weight:normal;font-style:normal;transform:scaleX(0.9624);-webkit-text-stroke:0;">21.10.2018</div>
<div class="t" style="left:204.95px;top:344.00px;font-size:13px;line-height:15px;color:#000;font-weight:normal;font-style:normal;transform:scaleX(0.9900);">Товар ВВ</div>
<svg style="position:absolute;left:319.90px;top:346.00px;overflow:visible" width="9.40" height="11.00"><path d="M2.90 1.00 V10.00 M1.30 1.60 H5.40 A2.00 2.00 0 0 1 5.40 5.60 H1.30 M1.00 7.60 H6.00" stroke="#000" stroke-width="1.2" fill="none"/></svg>
<div class="t" style="left:278.87px;top:344.00px;font-size:13px;line-height:15px;color:#000;font-weight:normal;font-style:normal;transform:scaleX(0.9600);">738,00</div>
<div class="t" style="left:356.00px;top:344.00px;font-size:13px;line-height:15px;color:#000;font-weight:normal;font-style:normal;transform:scaleX(0.9700);">3 шт.</div>
<svg style="position:absolute;left:447.70px;top:346.00px;overflow:visible" width="9.40" height="11.00"><path d="M2.90 1.00 V10.00 M1.30 1.60 H5.40 A2.00 2.00 0 0 1 5.40 5.60 H1.30 M1.00 7.60 H6.00" stroke="#ea8530" stroke-width="1.75" fill="none"/></svg>
<div class="t" style="left:396.25px;top:344.00px;font-size:13px;line-height:15px;color:#ea8530;font-weight:bold;font-style:normal;transform:scaleX(0.9500);">2 214,00</div>
<div class="t" style="left:29.62px;top:364.00px;font-size:13px;line-height:15px;color:#000;font-weight:normal;font-style:normal;transform:scaleX(0.9326);">Н-03</div>
<div class="t" style="left:66.18px;top:364.00px;font-size:13px;line-height:15px;color:#dfeeff;font-weight:normal;font-style:normal;transform:scaleX(0.9624);-webkit-text-stroke:0;">15.10.2018</div>
<div class="t" style="left:137.28px;top:364.00px;font-size:13px;line-height:15px;color:#dfeeff;font-weight:normal;font-style:normal;transform:scaleX(0.9624);-webkit-text-stroke:0;">21.10.2018</div>
<div class="t" style="left:204.95px;top:364.00px;font-size:13px;line-height:15px;color:#000;font-weight:normal;font-style:normal;transform:scaleX(0.9900);">Товар ГГ</div>
<svg style="position:absolute;left:319.90px;top:366.00px;overflow:visible" width="9.40" height="11.00"><path d="M2.90 1.00 V10.00 M1.30 1.60 H5.40 A2.00 2.00 0 0 1 5.40 5.60 H1.30 M1.00 7.60 H6.00" stroke="#000" stroke-width="1.2" fill="none"/></svg>
<div class="t" style="left:278.87px;top:364.00px;font-size:13px;line-height:15px;color:#000;font-weight:normal;font-style:normal;transform:scaleX(0.9600);">364,00</div>
<div class="t" style="left:356.00px;top:364.00px;font-size:13px;line-height:15px;color:#000;font-weight:normal;font-style:normal;transform:scaleX(0.9700);">1 шт.</div>
<svg style="position:absolute;left:447.70px;top:366.00px;overflow:visible" width="9.40" height="11.00"><path d="M2.90 1.00 V10.00 M1.30 1.60 H5.40 A2.00 2.00 0 0 1 5.40 5.60 H1.30 M1.00 7.60 H6.00" stroke="#ea8530" stroke-width="1.75" fill="none"/></svg>
<div class="t" style="left:406.51px;top:364.00px;font-size:13px;line-height:15px;color:#ea8530;font-weight:bold;font-style:normal;transform:scaleX(0.9500);">364,00</div>
<div class="t" style="left:29.62px;top:384.00px;font-size:13px;line-height:15px;color:#000;font-weight:normal;font-style:normal;transform:scaleX(0.9326);">Н-03</div>
<div class="t" style="left:66.18px;top:384.00px;font-size:13px;line-height:15px;color:#dfeeff;font-weight:normal;font-style:normal;transform:scaleX(0.9624);-webkit-text-stroke:0;">15.10.2018</div>
<div class="t" style="left:137.28px;top:384.00px;font-size:13px;line-height:15px;color:#dfeeff;font-weight:normal;font-style:normal;transform:scaleX(0.9624);-webkit-text-stroke:0;">21.10.2018</div>
<div class="t" style="left:204.95px;top:384.00px;font-size:13px;line-height:15px;color:#000;font-weight:normal;font-style:normal;transform:scaleX(0.9900);">Товар ДД</div>
<svg style="position:absolute;left:319.90px;top:386.00px;overflow:visible" width="9.40" height="11.00"><path d="M2.90 1.00 V10.00 M1.30 1.60 H5.40 A2.00 2.00 0 0 1 5.40 5.60 H1.30 M1.00 7.60 H6.00" stroke="#000" stroke-width="1.2" fill="none"/></svg>
<div class="t" style="left:278.87px;top:384.00px;font-size:13px;line-height:15px;color:#000;font-weight:normal;font-style:normal;transform:scaleX(0.9600);">286,00</div>
<div class="t" style="left:356.00px;top:384.00px;font-size:13px;line-height:15px;color:#000;font-weight:normal;font-style:normal;transform:scaleX(0.9700);">5 шт.</div>
<svg style="position:absolute;left:447.70px;top:386.00px;overflow:visible" width="9.40" height="11.00"><path d="M2.90 1.00 V10.00 M1.30 1.60 H5.40 A2.00 2.00 0 0 1 5.40 5.60 H1.30 M1.00 7.60 H6.00" stroke="#ea8530" stroke-width="1.75" fill="none"/></svg>
<div class="t" style="left:396.25px;top:384.00px;font-size:13px;line-height:15px;color:#ea8530;font-weight:bold;font-style:normal;transform:scaleX(0.9500);">1 430,00</div>
<div class="t" style="left:29.55px;top:404.00px;font-size:13px;line-height:15px;color:#000;font-weight:normal;font-style:normal;transform:scaleX(0.9326);">Н-04</div>
<div class="t" style="left:66.18px;top:404.00px;font-size:13px;line-height:15px;color:#dfeeff;font-weight:normal;font-style:normal;transform:scaleX(0.9624);-webkit-text-stroke:0;">22.10.2018</div>
<div class="t" style="left:137.28px;top:404.00px;font-size:13px;line-height:15px;color:#dfeeff;font-weight:normal;font-style:normal;transform:scaleX(0.9624);-webkit-text-stroke:0;">28.10.2018</div>
<div class="t" style="left:204.94px;top:404.00px;font-size:13px;line-height:15px;color:#000;font-weight:normal;font-style:normal;transform:scaleX(1.0405);">Товар</div>
<div class="t" style="left:244.72px;top:404.00px;font-size:13px;line-height:15px;color:#000;font-weight:bold;font-style:normal;transform:scaleX(0.9366);">АА</div>
<svg style="position:absolute;left:319.90px;top:406.00px;overflow:visible" width="9.40" height="11.00"><path d="M2.90 1.00 V10.00 M1.30 1.60 H5.40 A2.00 2.00 0 0 1 5.40 5.60 H1.30 M1.00 7.60 H6.00" stroke="#000" stroke-width="1.2" fill="none"/></svg>
<div class="t" style="left:278.87px;top:404.00px;font-size:13px;line-height:15px;color:#000;font-weight:normal;font-style:normal;transform:scaleX(0.9600);">894,00</div>
<div class="t" style="left:356.00px;top:404.00px;font-size:13px;line-height:15px;color:#000;font-weight:normal;font-style:normal;transform:scaleX(0.9700);">7 шт.</div>
<svg style="position:absolute;left:447.70px;top:406.00px;overflow:visible" width="9.40" height="11.00"><path d="M2.90 1.00 V10.00 M1.30 1.60 H5.40 A2.00 2.00 0 0 1 5.40 5.60 H1.30 M1.00 7.60 H6.00" stroke="#ea8530" stroke-width="1.75" fill="none"/></svg>
<div class="t" style="left:396.25px;top:404.00px;font-size:13px;line-height:15px;color:#ea8530;font-weight:bold;font-style:normal;transform:scaleX(0.9500);">6 258,00</div>
<div class="t" style="left:29.55px;top:424.00px;font-size:13px;line-height:15px;color:#000;font-weight:normal;font-style:normal;transform:scaleX(0.9326);">Н-04</div>
<div class="t" style="left:66.18px;top:424.00px;font-size:13px;line-height:15px;color:#dfeeff;font-weight:normal;font-style:normal;transform:scaleX(0.9624);-webkit-text-stroke:0;">22.10.2018</div>
<div class="t" style="left:137.28px;top:424.00px;font-size:13px;line-height:15px;color:#dfeeff;font-weight:normal;font-style:normal;transform:scaleX(0.9624);-webkit-text-stroke:0;">28.10.2018</div>
<div class="t" style="left:204.95px;top:424.00px;font-size:13px;line-height:15px;color:#000;font-weight:normal;font-style:normal;transform:scaleX(0.9900);">Товар ББ</div>
<svg style="position:absolute;left:319.90px;top:426.00px;overflow:visible" width="9.40" height="11.00"><path d="M2.90 1.00 V10.00 M1.30 1.60 H5.40 A2.00 2.00 0 0 1 5.40 5.60 H1.30 M1.00 7.60 H6.00" stroke="#000" stroke-width="1.2" fill="none"/></svg>
<div class="t" style="left:278.87px;top:424.00px;font-size:13px;line-height:15px;color:#000;font-weight:normal;font-style:normal;transform:scaleX(0.9600);">596,00</div>
<div class="t" style="left:356.00px;top:424.00px;font-size:13px;line-height:15px;color:#000;font-weight:normal;font-style:normal;transform:scaleX(0.9700);">1 шт.</div>
<svg style="position:absolute;left:447.70px;top:426.00px;overflow:visible" width="9.40" height="11.00"><path d="M2.90 1.00 V10.00 M1.30 1.60 H5.40 A2.00 2.00 0 0 1 5.40 5.60 H1.30 M1.00 7.60 H6.00" stroke="#ea8530" stroke-width="1.75" fill="none"/></svg>
<div class="t" style="left:406.51px;top:424.00px;font-size:13px;line-height:15px;color:#ea8530;font-weight:bold;font-style:normal;transform:scaleX(0.9500);">596,00</div>
<div class="t" style="left:29.55px;top:444.00px;font-size:13px;line-height:15px;color:#000;font-weight:normal;font-style:normal;transform:scaleX(0.9326);">Н-04</div>
<div class="t" style="left:66.18px;top:444.00px;font-size:13px;line-height:15px;color:#dfeeff;font-weight:normal;font-style:normal;transform:scaleX(0.9624);-webkit-text-stroke:0;">22.10.2018</div>
<div class="t" style="left:137.28px;top:444.00px;font-size:13px;line-height:15px;color:#dfeeff;font-weight:normal;font-style:normal;transform:scaleX(0.9624);-webkit-text-stroke:0;">28.10.2018</div>
<div class="t" style="left:204.95px;top:444.00px;font-size:13px;line-height:15px;color:#000;font-weight:normal;font-style:normal;transform:scaleX(0.9900);">Товар ВВ</div>
<svg style="position:absolute;left:319.90px;top:446.00px;overflow:visible" width="9.40" height="11.00"><path d="M2.90 1.00 V10.00 M1.30 1.60 H5.40 A2.00 2.00 0 0 1 5.40 5.60 H1.30 M1.00 7.60 H6.00" stroke="#000" stroke-width="1.2" fill="none"/></svg>
<div class="t" style="left:278.87px;top:444.00px;font-size:13px;line-height:15px;color:#000;font-weight:normal;font-style:normal;transform:scaleX(0.9600);">738,00</div>
<div class="t" style="left:356.00px;top:444.00px;font-size:13px;line-height:15px;color:#000;font-weight:normal;font-style:normal;transform:scaleX(0.9700);">6 шт.</div>
<svg style="position:absolute;left:447.70px;top:446.00px;overflow:visible" width="9.40" height="11.00"><path d="M2.90 1.00 V10.00 M1.30 1.60 H5.40 A2.00 2.00 0 0 1 5.40 5.60 H1.30 M1.00 7.60 H6.00" stroke="#ea8530" stroke-width="1.75" fill="none"/></svg>
<div class="t" style="left:396.25px;top:444.00px;font-size:13px;line-height:15px;color:#ea8530;font-weight:bold;font-style:normal;transform:scaleX(0.9500);">4 428,00</div>
<div class="t" style="left:29.55px;top:464.00px;font-size:13px;line-height:15px;color:#000;font-weight:normal;font-style:normal;transform:scaleX(0.9326);">Н-04</div>
<div class="t" style="left:66.18px;top:464.00px;font-size:13px;line-height:15px;color:#dfeeff;font-weight:normal;font-style:normal;transform:scaleX(0.9624);-webkit-text-stroke:0;">22.10.2018</div>
<div class="t" style="left:137.28px;top:464.00px;font-size:13px;line-height:15px;color:#dfeeff;font-weight:normal;font-style:normal;transform:scaleX(0.9624);-webkit-text-stroke:0;">28.10.2018</div>
<div class="t" style="left:204.95px;top:464.00px;font-size:13px;line-height:15px;color:#000;font-weight:normal;font-style:normal;transform:scaleX(0.9900);">Товар ГГ</div>
<svg style="position:absolute;left:319.90px;top:466.00px;overflow:visible" width="9.40" height="11.00"><path d="M2.90 1.00 V10.00 M1.30 1.60 H5.40 A2.00 2.00 0 0 1 5.40 5.60 H1.30 M1.00 7.60 H6.00" stroke="#000" stroke-width="1.2" fill="none"/></svg>
<div class="t" style="left:278.87px;top:464.00px;font-size:13px;line-height:15px;color:#000;font-weight:normal;font-style:normal;transform:scaleX(0.9600);">364,00</div>
<div class="t" style="left:356.00px;top:464.00px;font-size:13px;line-height:15px;color:#000;font-weight:normal;font-style:normal;transform:scaleX(0.9700);">8 шт.</div>
<svg style="position:absolute;left:447.70px;top:466.00px;overflow:visible" width="9.40" height="11.00"><path d="M2.90 1.00 V10.00 M1.30 1.60 H5.40 A2.00 2.00 0 0 1 5.40 5.60 H1.30 M1.00 7.60 H6.00" stroke="#ea8530" stroke-width="1.75" fill="none"/></svg>
<div class="t" style="left:396.25px;top:464.00px;font-size:13px;line-height:15px;color:#ea8530;font-weight:bold;font-style:normal;transform:scaleX(0.9500);">2 912,00</div>
<div class="t" style="left:29.55px;top:484.00px;font-size:13px;line-height:15px;color:#000;font-weight:normal;font-style:normal;transform:scaleX(0.9326);">Н-04</div>
<div class="t" style="left:66.18px;top:484.00px;font-size:13px;line-height:15px;color:#dfeeff;font-weight:normal;font-style:normal;transform:scaleX(0.9624);-webkit-text-stroke:0;">22.10.2018</div>
<div class="t" style="left:137.28px;top:484.00px;font-size:13px;line-height:15px;color:#dfeeff;font-weight:normal;font-style:normal;transform:scaleX(0.9624);-webkit-text-stroke:0;">28.10.2018</div>
<div class="t" style="left:204.95px;top:484.00px;font-size:13px;line-height:15px;color:#000;font-weight:normal;font-style:normal;transform:scaleX(0.9900);">Товар ДД</div>
<svg style="position:absolute;left:319.90px;top:486.00px;overflow:visible" width="9.40" height="11.00"><path d="M2.90 1.00 V10.00 M1.30 1.60 H5.40 A2.00 2.00 0 0 1 5.40 5.60 H1.30 M1.00 7.60 H6.00" stroke="#000" stroke-width="1.2" fill="none"/></svg>
<div class="t" style="left:278.87px;top:484.00px;font-size:13px;line-height:15px;color:#000;font-weight:normal;font-style:normal;transform:scaleX(0.9600);">286,00</div>
<div class="t" style="left:356.00px;top:484.00px;font-size:13px;line-height:15px;color:#000;font-weight:normal;font-style:normal;transform:scaleX(0.9700);">7 шт.</div>
<svg style="position:absolute;left:447.70px;top:486.00px;overflow:visible" width="9.40" height="11.00"><path d="M2.90 1.00 V10.00 M1.30 1.60 H5.40 A2.00 2.00 0 0 1 5.40 5.60 H1.30 M1.00 7.60 H6.00" stroke="#ea8530" stroke-width="1.75" fill="none"/></svg>
<div class="t" style="left:396.25px;top:484.00px;font-size:13px;line-height:15px;color:#ea8530;font-weight:bold;font-style:normal;transform:scaleX(0.9500);">2 002,00</div>
<div class="t" style="left:29.62px;top:504.00px;font-size:13px;line-height:15px;color:#000;font-weight:normal;font-style:normal;transform:scaleX(0.9326);">Н-05</div>
<div class="t" style="left:66.18px;top:504.00px;font-size:13px;line-height:15px;color:#dfeeff;font-weight:normal;font-style:normal;transform:scaleX(0.9624);-webkit-text-stroke:0;">29.10.2018</div>
<div class="t" style="left:138.24px;top:504.00px;font-size:13px;line-height:15px;color:#dfeeff;font-weight:normal;font-style:normal;transform:scaleX(0.9624);-webkit-text-stroke:0;">04.11.2018</div>
<div class="t" style="left:204.94px;top:504.00px;font-size:13px;line-height:15px;color:#000;font-weight:normal;font-style:normal;transform:scaleX(1.0405);">Товар</div>
<div class="t" style="left:244.72px;top:504.00px;font-size:13px;line-height:15px;color:#000;font-weight:bold;font-style:normal;transform:scaleX(0.9366);">АА</div>
<svg style="position:absolute;left:319.90px;top:506.00px;overflow:visible" width="9.40" height="11.00"><path d="M2.90 1.00 V10.00 M1.30 1.60 H5.40 A2.00 2.00 0 0 1 5.40 5.60 H1.30 M1.00 7.60 H6.00" stroke="#000" stroke-width="1.2" fill="none"/></svg>
<div class="t" style="left:278.87px;top:504.00px;font-size:13px;line-height:15px;color:#000;font-weight:normal;font-style:normal;transform:scaleX(0.9600);">894,00</div>
<div class="t" style="left:356.00px;top:504.00px;font-size:13px;line-height:15px;color:#000;font-weight:normal;font-style:normal;transform:scaleX(0.9700);">7 шт.</div>
<svg style="position:absolute;left:447.70px;top:506.00px;overflow:visible" width="9.40" height="11.00"><path d="M2.90 1.00 V10.00 M1.30 1.60 H5.40 A2.00 2.00 0 0 1 5.40 5.60 H1.30 M1.00 7.60 H6.00" stroke="#ea8530" stroke-width="1.75" fill="none"/></svg>
<div class="t" style="left:396.25px;top:504.00px;font-size:13px;line-height:15px;color:#ea8530;font-weight:bold;font-style:normal;transform:scaleX(0.9500);">6 258,00</div>
<div class="t" style="left:29.62px;top:524.00px;font-size:13px;line-height:15px;color:#000;font-weight:normal;font-style:normal;transform:scaleX(0.9326);">Н-05</div>
<div class="t" style="left:66.18px;top:524.00px;font-size:13px;line-height:15px;color:#dfeeff;font-weight:normal;font-style:normal;transform:scaleX(0.9624);-webkit-text-stroke:0;">29.10.2018</div>
<div class="t" style="left:138.24px;top:524.00px;font-size:13px;line-height:15px;color:#dfeeff;font-weight:normal;font-style:normal;transform:scaleX(0.9624);-webkit-text-stroke:0;">04.11.2018</div>
<div class="t" style="left:204.95px;top:524.00px;font-size:13px;line-height:15px;color:#000;font-weight:normal;font-style:normal;transform:scaleX(0.9900);">Товар ББ</div>
<svg style="position:absolute;left:319.90px;top:526.00px;overflow:visible" width="9.40" height="11.00"><path d="M2.90 1.00 V10.00 M1.30 1.60 H5.40 A2.00 2.00 0 0 1 5.40 5.60 H1.30 M1.00 7.60 H6.00" stroke="#000" stroke-width="1.2" fill="none"/></svg>
<div class="t" style="left:278.87px;top:524.00px;font-size:13px;line-height:15px;color:#000;font-weight:normal;font-style:normal;transform:scaleX(0.9600);">596,00</div>
<div class="t" style="left:356.00px;top:524.00px;font-size:13px;line-height:15px;color:#000;font-weight:normal;font-style:normal;transform:scaleX(0.9700);">4 шт.</div>
<svg style="position:absolute;left:447.70px;top:526.00px;overflow:visible" width="9.40" height="11.00"><path d="M2.90 1.00 V10.00 M1.30 1.60 H5.40 A2.00 2.00 0 0 1 5.40 5.60 H1.30 M1.00 7.60 H6.00" stroke="#ea8530" stroke-width="1.75" fill="none"/></svg>
<div class="t" style="left:396.25px;top:524.00px;font-size:13px;line-height:15px;color:#ea8530;font-weight:bold;font-style:normal;transform:scaleX(0.9500);">2 384,00</div>
<div class="t" style="left:29.62px;top:544.00px;font-size:13px;line-height:15px;color:#000;font-weight:normal;font-style:normal;transform:scaleX(0.9326);">Н-05</div>
<div class="t" style="left:66.18px;top:544.00px;font-size:13px;line-height:15px;color:#dfeeff;font-weight:normal;font-style:normal;transform:scaleX(0.9624);-webkit-text-stroke:0;">29.10.2018</div>
<div class="t" style="left:138.24px;top:544.00px;font-size:13px;line-height:15px;color:#dfeeff;font-weight:normal;font-style:normal;transform:scaleX(0.9624);-webkit-text-stroke:0;">04.11.2018</div>
<div class="t" style="left:204.95px;top:544.00px;font-size:13px;line-height:15px;color:#000;font-weight:normal;font-style:normal;transform:scaleX(0.9900);">Товар ВВ</div>
<svg style="position:absolute;left:319.90px;top:546.00px;overflow:visible" width="9.40" height="11.00"><path d="M2.90 1.00 V10.00 M1.30 1.60 H5.40 A2.00 2.00 0 0 1 5.40 5.60 H1.30 M1.00 7.60 H6.00" stroke="#000" stroke-width="1.2" fill="none"/></svg>
<div class="t" style="left:278.87px;top:544.00px;font-size:13px;line-height:15px;color:#000;font-weight:normal;font-style:normal;transform:scaleX(0.9600);">738,00</div>
<div class="t" style="left:356.00px;top:544.00px;font-size:13px;line-height:15px;color:#000;font-weight:normal;font-style:normal;transform:scaleX(0.9700);">0 шт.</div>
<div class="t" style="left:428.28px;top:544.00px;font-size:13px;line-height:15px;color:#ea8530;font-weight:bold;font-style:normal;transform:scaleX(0.8358);">-</div>
<svg style="position:absolute;left:447.70px;top:546.00px;overflow:visible" width="9.40" height="11.00"><path d="M2.90 1.00 V10.00 M1.30 1.60 H5.40 A2.00 2.00 0 0 1 5.40 5.60 H1.30 M1.00 7.60 H6.00" stroke="#ea8530" stroke-width="1.75" fill="none"/></svg>
<div class="t" style="left:29.62px;top:564.00px;font-size:13px;line-height:15px;color:#000;font-weight:normal;font-style:normal;transform:scaleX(0.9326);">Н-05</div>
<div class="t" style="left:66.18px;top:564.00px;font-size:13px;line-height:15px;color:#dfeeff;font-weight:normal;font-style:normal;transform:scaleX(0.9624);-webkit-text-stroke:0;">29.10.2018</div>
<div class="t" style="left:138.24px;top:564.00px;font-size:13px;line-height:15px;color:#dfeeff;font-weight:normal;font-style:normal;transform:scaleX(0.9624);-webkit-text-stroke:0;">04.11.2018</div>
<div class="t" style="left:204.95px;top:564.00px;font-size:13px;line-height:15px;color:#000;font-weight:normal;font-style:normal;transform:scaleX(0.9900);">Товар ГГ</div>
<svg style="position:absolute;left:319.90px;top:566.00px;overflow:visible" width="9.40" height="11.00"><path d="M2.90 1.00 V10.00 M1.30 1.60 H5.40 A2.00 2.00 0 0 1 5.40 5.60 H1.30 M1.00 7.60 H6.00" stroke="#000" stroke-width="1.2" fill="none"/></svg>
<div class="t" style="left:278.87px;top:564.00px;font-size:13px;line-height:15px;color:#000;font-weight:normal;font-style:normal;transform:scaleX(0.9600);">364,00</div>
<div class="t" style="left:356.00px;top:564.00px;font-size:13px;line-height:15px;color:#000;font-weight:normal;font-style:normal;transform:scaleX(0.9700);">7 шт.</div>
<svg style="position:absolute;left:447.70px;top:566.00px;overflow:visible" width="9.40" height="11.00"><path d="M2.90 1.00 V10.00 M1.30 1.60 H5.40 A2.00 2.00 0 0 1 5.40 5.60 H1.30 M1.00 7.60 H6.00" stroke="#ea8530" stroke-width="1.75" fill="none"/></svg>
<div class="t" style="left:396.25px;top:564.00px;font-size:13px;line-height:15px;color:#ea8530;font-weight:bold;font-style:normal;transform:scaleX(0.9500);">2 548,00</div>
<div class="t" style="left:29.62px;top:584.00px;font-size:13px;line-height:15px;color:#000;font-weight:normal;font-style:normal;transform:scaleX(0.9326);">Н-05</div>
<div class="t" style="left:66.18px;top:584.00px;font-size:13px;line-height:15px;color:#dfeeff;font-weight:normal;font-style:normal;transform:scaleX(0.9624);-webkit-text-stroke:0;">29.10.2018</div>
<div class="t" style="left:138.24px;top:584.00px;font-size:13px;line-height:15px;color:#dfeeff;font-weight:normal;font-style:normal;transform:scaleX(0.9624);-webkit-text-stroke:0;">04.11.2018</div>
<div class="t" style="left:204.95px;top:584.00px;font-size:13px;line-height:15px;color:#000;font-weight:normal;font-style:normal;transform:scaleX(0.9900);">Товар ДД</div>
<svg style="position:absolute;left:319.90px;top:586.00px;overflow:visible" width="9.40" height="11.00"><path d="M2.90 1.00 V10.00 M1.30 1.60 H5.40 A2.00 2.00 0 0 1 5.40 5.60 H1.30 M1.00 7.60 H6.00" stroke="#000" stroke-width="1.2" fill="none"/></svg>
<div class="t" style="left:278.87px;top:584.00px;font-size:13px;line-height:15px;color:#000;font-weight:normal;font-style:normal;transform:scaleX(0.9600);">286,00</div>
<div class="t" style="left:356.00px;top:584.00px;font-size:13px;line-height:15px;color:#000;font-weight:normal;font-style:normal;transform:scaleX(0.9700);">4 шт.</div>
<svg style="position:absolute;left:447.70px;top:586.00px;overflow:visible" width="9.40" height="11.00"><path d="M2.90 1.00 V10.00 M1.30 1.60 H5.40 A2.00 2.00 0 0 1 5.40 5.60 H1.30 M1.00 7.60 H6.00" stroke="#ea8530" stroke-width="1.75" fill="none"/></svg>
<div class="t" style="left:396.25px;top:584.00px;font-size:13px;line-height:15px;color:#ea8530;font-weight:bold;font-style:normal;transform:scaleX(0.9500);">1 144,00</div>
<div style="left:589px;top:100px;width:107px;height:101px;background:#c6e9cc;"></div>
<div style="left:695px;top:100px;width:85px;height:101px;background:#f2f2f2;"></div>
<div style="left:589px;top:100px;width:107px;height:1px;background:#000;"></div>
<div style="left:589px;top:120px;width:107px;height:1px;background:#000;"></div>
<div style="left:589px;top:100px;width:1px;height:21px;background:#000;"></div>
<div style="left:695px;top:100px;width:1px;height:21px;background:#000;"></div>
<div style="left:695px;top:100px;width:85px;height:1px;background:#000;"></div>
<div style="left:695px;top:120px;width:85px;height:1px;background:#000;"></div>
<div style="left:695px;top:100px;width:1px;height:21px;background:#000;"></div>
<div style="left:779px;top:100px;width:1px;height:21px;background:#000;"></div>
<div style="left:589px;top:120px;width:107px;height:1px;background:#000;"></div>
<div style="left:589px;top:140px;width:107px;height:1px;background:#000;"></div>
<div style="left:589px;top:120px;width:1px;height:21px;background:#000;"></div>
<div style="left:695px;top:120px;width:1px;height:21px;background:#000;"></div>
<div style="left:695px;top:120px;width:85px;height:1px;background:#000;"></div>
<div style="left:695px;top:140px;width:85px;height:1px;background:#000;"></div>
<div style="left:695px;top:120px;width:1px;height:21px;background:#000;"></div>
<div style="left:779px;top:120px;width:1px;height:21px;background:#000;"></div>
<div style="left:589px;top:140px;width:107px;height:1px;background:#000;"></div>
<div style="left:589px;top:160px;width:107px;height:1px;background:#000;"></div>
<div style="left:589px;top:140px;width:1px;height:21px;background:#000;"></div>
<div style="left:695px;top:140px;width:1px;height:21px;background:#000;"></div>
<div style="left:695px;top:140px;width:85px;height:1px;background:#000;"></div>
<div style="left:695px;top:160px;width:85px;height:1px;background:#000;"></div>
<div style="left:695px;top:140px;width:1px;height:21px;background:#000;"></div>
<div style="left:779px;top:140px;width:1px;height:21px;background:#000;"></div>
<div style="left:589px;top:160px;width:107px;height:1px;background:#000;"></div>
<div style="left:589px;top:180px;width:107px;height:1px;background:#000;"></div>
<div style="left:589px;top:160px;width:1px;height:21px;background:#000;"></div>
<div style="left:695px;top:160px;width:1px;height:21px;background:#000;"></div>
<div style="left:695px;top:160px;width:85px;height:1px;background:#000;"></div>
<div style="left:695px;top:180px;width:85px;height:1px;background:#000;"></div>
<div style="left:695px;top:160px;width:1px;height:21px;background:#000;"></div>
<div style="left:779px;top:160px;width:1px;height:21px;background:#000;"></div>
<div style="left:589px;top:180px;width:107px;height:1px;background:#000;"></div>
<div style="left:589px;top:200px;width:107px;height:1px;background:#000;"></div>
<div style="left:589px;top:180px;width:1px;height:21px;background:#000;"></div>
<div style="left:695px;top:180px;width:1px;height:21px;background:#000;"></div>
<div style="left:695px;top:180px;width:85px;height:1px;background:#000;"></div>
<div style="left:695px;top:200px;width:85px;height:1px;background:#000;"></div>
<div style="left:695px;top:180px;width:1px;height:21px;background:#000;"></div>
<div style="left:779px;top:180px;width:1px;height:21px;background:#000;"></div>
<div class="t" style="left:592.08px;top:103.80px;font-size:13px;line-height:15px;color:#0a5a14;font-weight:bold;font-style:normal;transform:scaleX(1.0307);">Сумма</div>
<div class="t" style="left:591.76px;top:123.80px;font-size:13px;line-height:15px;color:#0a5a14;font-weight:bold;font-style:normal;transform:scaleX(0.9832);">Количество</div>
<div class="t" style="left:592.09px;top:143.80px;font-size:13px;line-height:15px;color:#0a5a14;font-weight:bold;font-style:normal;transform:scaleX(1.0221);">Среднее</div>
<div class="t" style="left:591.73px;top:163.80px;font-size:13px;line-height:15px;color:#0a5a14;font-weight:bold;font-style:normal;transform:scaleX(1.0259);">Максимальное</div>
<div class="t" style="left:591.72px;top:183.80px;font-size:13px;line-height:15px;color:#0a5a14;font-weight:bold;font-style:normal;transform:scaleX(1.0341);">Минимальное</div>
<svg style="position:absolute;left:763.20px;top:106.00px;overflow:visible" width="9.40" height="11.00"><path d="M2.90 1.00 V10.00 M1.30 1.60 H5.40 A2.00 2.00 0 0 1 5.40 5.60 H1.30 M1.00 7.60 H6.00" stroke="#ea8530" stroke-width="1.75" fill="none"/></svg>
<div class="t" style="left:703.36px;top:104.00px;font-size:13px;line-height:15px;color:#ea8530;font-weight:bold;font-style:normal;transform:scaleX(0.9763);">69 708,00</div>
<div class="t" style="left:738.33px;top:124.00px;font-size:13px;line-height:15px;color:#ea8530;font-weight:bold;font-style:normal;transform:scaleX(1.0425);">25 шт.</div>
<svg style="position:absolute;left:763.20px;top:146.00px;overflow:visible" width="9.40" height="11.00"><path d="M2.90 1.00 V10.00 M1.30 1.60 H5.40 A2.00 2.00 0 0 1 5.40 5.60 H1.30 M1.00 7.60 H6.00" stroke="#ea8530" stroke-width="1.75" fill="none"/></svg>
<div class="t" style="left:711.57px;top:144.00px;font-size:13px;line-height:15px;color:#ea8530;font-weight:bold;font-style:normal;transform:scaleX(0.9527);">2 788,32</div>
<svg style="position:absolute;left:763.20px;top:166.00px;overflow:visible" width="9.40" height="11.00"><path d="M2.90 1.00 V10.00 M1.30 1.60 H5.40 A2.00 2.00 0 0 1 5.40 5.60 H1.30 M1.00 7.60 H6.00" stroke="#ea8530" stroke-width="1.75" fill="none"/></svg>
<div class="t" style="left:711.62px;top:164.00px;font-size:13px;line-height:15px;color:#ea8530;font-weight:bold;font-style:normal;transform:scaleX(0.9527);">8 940,00</div>
<div class="t" style="left:743.28px;top:184.00px;font-size:13px;line-height:15px;color:#ea8530;font-weight:bold;font-style:normal;transform:scaleX(0.8358);">-</div>
<svg style="position:absolute;left:763.20px;top:186.00px;overflow:visible" width="9.40" height="11.00"><path d="M2.90 1.00 V10.00 M1.30 1.60 H5.40 A2.00 2.00 0 0 1 5.40 5.60 H1.30 M1.00 7.60 H6.00" stroke="#ea8530" stroke-width="1.75" fill="none"/></svg>
<div style="left:589px;top:220px;width:106px;height:20px;background:repeating-linear-gradient(135deg,#111 0 1.1px,#fff 1.1px 2.83px);"></div>
<div style="left:695px;top:220px;width:421px;height:21px;background:#fff;"></div>
<div style="left:528px;top:240px;width:168px;height:101px;background:#ffe699;"></div>
<div style="left:695px;top:240px;width:421px;height:101px;background:#ffc7ce;"></div>
<div style="left:589px;top:220px;width:107px;height:1px;background:#000;"></div>
<div style="left:589px;top:240px;width:107px;height:1px;background:#000;"></div>
<div style="left:589px;top:220px;width:1px;height:21px;background:#000;"></div>
<div style="left:695px;top:220px;width:1px;height:21px;background:#000;"></div>
<div style="left:695px;top:220px;width:85px;height:1px;background:#000;"></div>
<div style="left:695px;top:240px;width:85px;height:1px;background:#000;"></div>
<div style="left:695px;top:220px;width:1px;height:21px;background:#000;"></div>
<div style="left:779px;top:220px;width:1px;height:21px;background:#000;"></div>
<div style="left:779px;top:220px;width:85px;height:1px;background:#000;"></div>
<div style="left:779px;top:240px;width:85px;height:1px;background:#000;"></div>
<div style="left:779px;top:220px;width:1px;height:21px;background:#000;"></div>
<div style="left:863px;top:220px;width:1px;height:21px;background:#000;"></div>
<div style="left:863px;top:220px;width:85px;height:1px;background:#000;"></div>
<div style="left:863px;top:240px;width:85px;height:1px;background:#000;"></div>
<div style="left:863px;top:220px;width:1px;height:21px;background:#000;"></div>
<div style="left:947px;top:220px;width:1px;height:21px;background:#000;"></div>
<div style="left:947px;top:220px;width:85px;height:1px;background:#000;"></div>
<div style="left:947px;top:240px;width:85px;height:1px;background:#000;"></div>
<div style="left:947px;top:220px;width:1px;height:21px;background:#000;"></div>
<div style="left:1031px;top:220px;width:1px;height:21px;background:#000;"></div>
<div style="left:1031px;top:220px;width:85px;height:1px;background:#000;"></div>
<div style="left:1031px;top:240px;width:85px;height:1px;background:#000;"></div>
<div style="left:1031px;top:220px;width:1px;height:21px;background:#000;"></div>
<div style="left:1115px;top:220px;width:1px;height:21px;background:#000;"></div>
<div style="left:528px;top:240px;width:27px;height:1px;background:#000;"></div>
<div style="left:528px;top:340px;width:27px;height:1px;background:#000;"></div>
<div style="left:528px;top:240px;width:1px;height:101px;background:#000;"></div>
<div style="left:554px;top:240px;width:1px;height:101px;background:#000;"></div>
<div style="left:554px;top:240px;width:36px;height:1px;background:#000;"></div>
<div style="left:554px;top:300px;width:36px;height:1px;background:#000;"></div>
<div style="left:554px;top:240px;width:1px;height:61px;background:#000;"></div>
<div style="left:589px;top:240px;width:1px;height:61px;background:#000;"></div>
<div style="left:554px;top:300px;width:36px;height:1px;background:#000;"></div>
<div style="left:554px;top:340px;width:36px;height:1px;background:#000;"></div>
<div style="left:554px;top:300px;width:1px;height:41px;background:#000;"></div>
<div style="left:589px;top:300px;width:1px;height:41px;background:#000;"></div>
<div style="left:589px;top:240px;width:107px;height:1px;background:#000;"></div>
<div style="left:589px;top:260px;width:107px;height:1px;background:#000;"></div>
<div style="left:589px;top:240px;width:1px;height:21px;background:#000;"></div>
<div style="left:695px;top:240px;width:1px;height:21px;background:#000;"></div>
<div style="left:695px;top:240px;width:85px;height:1px;background:#000;"></div>
<div style="left:695px;top:260px;width:85px;height:1px;background:#000;"></div>
<div style="left:695px;top:240px;width:1px;height:21px;background:#000;"></div>
<div style="left:779px;top:240px;width:1px;height:21px;background:#000;"></div>
<div style="left:779px;top:240px;width:85px;height:1px;background:#000;"></div>
<div style="left:779px;top:260px;width:85px;height:1px;background:#000;"></div>
<div style="left:779px;top:240px;width:1px;height:21px;background:#000;"></div>
<div style="left:863px;top:240px;width:1px;height:21px;background:#000;"></div>
<div style="left:863px;top:240px;width:85px;height:1px;background:#000;"></div>
<div style="left:863px;top:260px;width:85px;height:1px;background:#000;"></div>
<div style="left:863px;top:240px;width:1px;height:21px;background:#000;"></div>
<div style="left:947px;top:240px;width:1px;height:21px;background:#000;"></div>
<div style="left:947px;top:240px;width:85px;height:1px;background:#000;"></div>
<div style="left:947px;top:260px;width:85px;height:1px;background:#000;"></div>
<div style="left:947px;top:240px;width:1px;height:21px;background:#000;"></div>
<div style="left:1031px;top:240px;width:1px;height:21px;background:#000;"></div>
<div style="left:1031px;top:240px;width:85px;height:1px;background:#000;"></div>
<div style="left:1031px;top:260px;width:85px;height:1px;background:#000;"></div>
<div style="left:1031px;top:240px;width:1px;height:21px;background:#000;"></div>
<div style="left:1115px;top:240px;width:1px;height:21px;background:#000;"></div>
<div style="left:589px;top:260px;width:107px;height:1px;background:#000;"></div>
<div style="left:589px;top:280px;width:107px;height:1px;background:#000;"></div>
<div style="left:589px;top:260px;width:1px;height:21px;background:#000;"></div>
<div style="left:695px;top:260px;width:1px;height:21px;background:#000;"></div>
<div style="left:695px;top:260px;width:85px;height:1px;background:#000;"></div>
<div style="left:695px;top:280px;width:85px;height:1px;background:#000;"></div>
<div style="left:695px;top:260px;width:1px;height:21px;background:#000;"></div>
<div style="left:779px;top:260px;width:1px;height:21px;background:#000;"></div>
<div style="left:779px;top:260px;width:85px;height:1px;background:#000;"></div>
<div style="left:779px;top:280px;width:85px;height:1px;background:#000;"></div>
<div style="left:779px;top:260px;width:1px;height:21px;background:#000;"></div>
<div style="left:863px;top:260px;width:1px;height:21px;background:#000;"></div>
<div style="left:863px;top:260px;width:85px;height:1px;background:#000;"></div>
<div style="left:863px;top:280px;width:85px;height:1px;background:#000;"></div>
<div style="left:863px;top:260px;width:1px;height:21px;background:#000;"></div>
<div style="left:947px;top:260px;width:1px;height:21px;background:#000;"></div>
<div style="left:947px;top:260px;width:85px;height:1px;background:#000;"></div>
<div style="left:947px;top:280px;width:85px;height:1px;background:#000;"></div>
<div style="left:947px;top:260px;width:1px;height:21px;background:#000;"></div>
<div style="left:1031px;top:260px;width:1px;height:21px;background:#000;"></div>
<div style="left:1031px;top:260px;width:85px;height:1px;background:#000;"></div>
<div style="left:1031px;top:280px;width:85px;height:1px;background:#000;"></div>
<div style="left:1031px;top:260px;width:1px;height:21px;background:#000;"></div>
<div style="left:1115px;top:260px;width:1px;height:21px;background:#000;"></div>
<div style="left:589px;top:280px;width:107px;height:1px;background:#000;"></div>
<div style="left:589px;top:300px;width:107px;height:1px;background:#000;"></div>
<div style="left:589px;top:280px;width:1px;height:21px;background:#000;"></div>
<div style="left:695px;top:280px;width:1px;height:21px;background:#000;"></div>
<div style="left:695px;top:280px;width:85px;height:1px;background:#000;"></div>
<div style="left:695px;top:300px;width:85px;height:1px;background:#000;"></div>
<div style="left:695px;top:280px;width:1px;height:21px;background:#000;"></div>
<div style="left:779px;top:280px;width:1px;height:21px;background:#000;"></div>
<div style="left:779px;top:280px;width:85px;height:1px;background:#000;"></div>
<div style="left:779px;top:300px;width:85px;height:1px;background:#000;"></div>
<div style="left:779px;top:280px;width:1px;height:21px;background:#000;"></div>
<div style="left:863px;top:280px;width:1px;height:21px;background:#000;"></div>
<div style="left:863px;top:280px;width:85px;height:1px;background:#000;"></div>
<div style="left:863px;top:300px;width:85px;height:1px;background:#000;"></div>
<div style="left:863px;top:280px;width:1px;height:21px;background:#000;"></div>
<div style="left:947px;top:280px;width:1px;height:21px;background:#000;"></div>
<div style="left:947px;top:280px;width:85px;height:1px;background:#000;"></div>
<div style="left:947px;top:300px;width:85px;height:1px;background:#000;"></div>
<div style="left:947px;top:280px;width:1px;height:21px;background:#000;"></div>
<div style="left:1031px;top:280px;width:1px;height:21px;background:#000;"></div>
<div style="left:1031px;top:280px;width:85px;height:1px;background:#000;"></div>
<div style="left:1031px;top:300px;width:85px;height:1px;background:#000;"></div>
<div style="left:1031px;top:280px;width:1px;height:21px;background:#000;"></div>
<div style="left:1115px;top:280px;width:1px;height:21px;background:#000;"></div>
<div style="left:589px;top:300px;width:107px;height:1px;background:#000;"></div>
<div style="left:589px;top:320px;width:107px;height:1px;background:#000;"></div>
<div style="left:589px;top:300px;width:1px;height:21px;background:#000;"></div>
<div style="left:695px;top:300px;width:1px;height:21px;background:#000;"></div>
<div style="left:695px;top:300px;width:85px;height:1px;background:#000;"></div>
<div style="left:695px;top:320px;width:85px;height:1px;background:#000;"></div>
<div style="left:695px;top:300px;width:1px;height:21px;background:#000;"></div>
<div style="left:779px;top:300px;width:1px;height:21px;background:#000;"></div>
<div style="left:779px;top:300px;width:85px;height:1px;background:#000;"></div>
<div style="left:779px;top:320px;width:85px;height:1px;background:#000;"></div>
<div style="left:779px;top:300px;width:1px;height:21px;background:#000;"></div>
<div style="left:863px;top:300px;width:1px;height:21px;background:#000;"></div>
<div style="left:863px;top:300px;width:85px;height:1px;background:#000;"></div>
<div style="left:863px;top:320px;width:85px;height:1px;background:#000;"></div>
<div style="left:863px;top:300px;width:1px;height:21px;background:#000;"></div>
<div style="left:947px;top:300px;width:1px;height:21px;background:#000;"></div>
<div style="left:947px;top:300px;width:85px;height:1px;background:#000;"></div>
<div style="left:947px;top:320px;width:85px;height:1px;background:#000;"></div>
<div style="left:947px;top:300px;width:1px;height:21px;background:#000;"></div>
<div style="left:1031px;top:300px;width:1px;height:21px;background:#000;"></div>
<div style="left:1031px;top:300px;width:85px;height:1px;background:#000;"></div>
<div style="left:1031px;top:320px;width:85px;height:1px;background:#000;"></div>
<div style="left:1031px;top:300px;width:1px;height:21px;background:#000;"></div>
<div style="left:1115px;top:300px;width:1px;height:21px;background:#000;"></div>
<div style="left:589px;top:320px;width:107px;height:1px;background:#000;"></div>
<div style="left:589px;top:340px;width:107px;height:1px;background:#000;"></div>
<div style="left:589px;top:320px;width:1px;height:21px;background:#000;"></div>
<div style="left:695px;top:320px;width:1px;height:21px;background:#000;"></div>
<div style="left:695px;top:320px;width:85px;height:1px;background:#000;"></div>
<div style="left:695px;top:340px;width:85px;height:1px;background:#000;"></div>
<div style="left:695px;top:320px;width:1px;height:21px;background:#000;"></div>
<div style="left:779px;top:320px;width:1px;height:21px;background:#000;"></div>
<div style="left:779px;top:320px;width:85px;height:1px;background:#000;"></div>
<div style="left:779px;top:340px;width:85px;height:1px;background:#000;"></div>
<div style="left:779px;top:320px;width:1px;height:21px;background:#000;"></div>
<div style="left:863px;top:320px;width:1px;height:21px;background:#000;"></div>
<div style="left:863px;top:320px;width:85px;height:1px;background:#000;"></div>
<div style="left:863px;top:340px;width:85px;height:1px;background:#000;"></div>
<div style="left:863px;top:320px;width:1px;height:21px;background:#000;"></div>
<div style="left:947px;top:320px;width:1px;height:21px;background:#000;"></div>
<div style="left:947px;top:320px;width:85px;height:1px;background:#000;"></div>
<div style="left:947px;top:340px;width:85px;height:1px;background:#000;"></div>
<div style="left:947px;top:320px;width:1px;height:21px;background:#000;"></div>
<div style="left:1031px;top:320px;width:1px;height:21px;background:#000;"></div>
<div style="left:1031px;top:320px;width:85px;height:1px;background:#000;"></div>
<div style="left:1031px;top:340px;width:85px;height:1px;background:#000;"></div>
<div style="left:1031px;top:320px;width:1px;height:21px;background:#000;"></div>
<div style="left:1115px;top:320px;width:1px;height:21px;background:#000;"></div>
<div class="t" style="left:697.52px;top:224.00px;font-size:13px;line-height:15px;color:#000;font-weight:normal;font-style:normal;transform:scaleX(0.9326);">Н-01</div>
<div class="t" style="left:781.52px;top:224.00px;font-size:13px;line-height:15px;color:#000;font-weight:normal;font-style:normal;transform:scaleX(0.9326);">Н-02</div>
<div class="t" style="left:865.52px;top:224.00px;font-size:13px;line-height:15px;color:#000;font-weight:normal;font-style:normal;transform:scaleX(0.9326);">Н-03</div>
<div class="t" style="left:949.52px;top:224.00px;font-size:13px;line-height:15px;color:#000;font-weight:normal;font-style:normal;transform:scaleX(0.9326);">Н-04</div>
<div class="t" style="left:1033.52px;top:224.00px;font-size:13px;line-height:15px;color:#000;font-weight:normal;font-style:normal;transform:scaleX(0.9326);">Н-05</div>
<svg style="position:absolute;left:763.20px;top:246.00px;overflow:visible" width="9.40" height="11.00"><path d="M2.90 1.00 V10.00 M1.30 1.60 H5.40 A2.00 2.00 0 0 1 5.40 5.60 H1.30 M1.00 7.60 H6.00" stroke="#9c0006" stroke-width="1.2" fill="none"/></svg>
<div class="t" style="left:704.69px;top:244.00px;font-size:13px;line-height:15px;color:#9c0006;font-weight:normal;font-style:normal;transform:scaleX(0.9628);">13 598,00</div>
<svg style="position:absolute;left:847.20px;top:246.00px;overflow:visible" width="9.40" height="11.00"><path d="M2.90 1.00 V10.00 M1.30 1.60 H5.40 A2.00 2.00 0 0 1 5.40 5.60 H1.30 M1.00 7.60 H6.00" stroke="#9c0006" stroke-width="1.2" fill="none"/></svg>
<div class="t" style="left:788.69px;top:244.00px;font-size:13px;line-height:15px;color:#9c0006;font-weight:normal;font-style:normal;transform:scaleX(0.9628);">14 036,00</div>
<svg style="position:absolute;left:931.20px;top:246.00px;overflow:visible" width="9.40" height="11.00"><path d="M2.90 1.00 V10.00 M1.30 1.60 H5.40 A2.00 2.00 0 0 1 5.40 5.60 H1.30 M1.00 7.60 H6.00" stroke="#9c0006" stroke-width="1.2" fill="none"/></svg>
<div class="t" style="left:872.69px;top:244.00px;font-size:13px;line-height:15px;color:#9c0006;font-weight:normal;font-style:normal;transform:scaleX(0.9628);">13 544,00</div>
<svg style="position:absolute;left:1015.20px;top:246.00px;overflow:visible" width="9.40" height="11.00"><path d="M2.90 1.00 V10.00 M1.30 1.60 H5.40 A2.00 2.00 0 0 1 5.40 5.60 H1.30 M1.00 7.60 H6.00" stroke="#9c0006" stroke-width="1.2" fill="none"/></svg>
<div class="t" style="left:956.69px;top:244.00px;font-size:13px;line-height:15px;color:#9c0006;font-weight:normal;font-style:normal;transform:scaleX(0.9628);">16 196,00</div>
<svg style="position:absolute;left:1099.20px;top:246.00px;overflow:visible" width="9.40" height="11.00"><path d="M2.90 1.00 V10.00 M1.30 1.60 H5.40 A2.00 2.00 0 0 1 5.40 5.60 H1.30 M1.00 7.60 H6.00" stroke="#9c0006" stroke-width="1.2" fill="none"/></svg>
<div class="t" style="left:1040.69px;top:244.00px;font-size:13px;line-height:15px;color:#9c0006;font-weight:normal;font-style:normal;transform:scaleX(0.9628);">12 334,00</div>
<div class="t" style="left:592.04px;top:243.60px;font-size:13px;line-height:15px;color:#9c6500;font-weight:normal;font-style:normal;transform:scaleX(1.0100);">Сумма</div>
<div class="t" style="left:591.60px;top:263.60px;font-size:13px;line-height:15px;color:#9c6500;font-weight:normal;font-style:normal;transform:scaleX(1.0447);">Количество</div>
<div class="t" style="left:592.01px;top:283.60px;font-size:13px;line-height:15px;color:#9c6500;font-weight:normal;font-style:normal;transform:scaleX(1.0601);">Среднее</div>
<div class="t" style="left:591.57px;top:303.60px;font-size:13px;line-height:15px;color:#9c6500;font-weight:normal;font-style:normal;transform:scaleX(1.0724);">Максимальное</div>
<div class="t" style="left:591.55px;top:323.60px;font-size:13px;line-height:15px;color:#9c6500;font-weight:normal;font-style:normal;transform:scaleX(1.0963);">Минимальное</div>
<div class="t" style="left:558.70px;top:263.00px;font-size:13px;line-height:15px;color:#9c6500;font-weight:normal;font-style:normal;transform:scaleX(0.9261);">2016</div>
<div class="t" style="left:558.70px;top:313.00px;font-size:13px;line-height:15px;color:#9c6500;font-weight:normal;font-style:normal;transform:scaleX(0.9278);">2019</div>
<div class="t" style="left:522px;top:283px;width:40px;height:16px;line-height:16px;text-align:center;font-size:13px;color:#9c6500;transform:rotate(-90deg);transform-origin:50% 50%;">Excel</div>
<div style="left:590px;top:341px;width:440px;height:19px;background:#fff;"></div>
<div class="t" style="left:592.91px;top:343.50px;font-size:13px;line-height:15px;color:#858585;font-weight:normal;font-style:italic;transform:scaleX(1.0589);-webkit-text-stroke:0;">* Учитываются только значения, где количество проданного &gt; 0</div>
<div style="left:696px;top:261px;width:105px;height:19px;background:#ffc7ce;"></div>
<div class="t" style="left:697.42px;top:264.00px;font-size:13px;line-height:15px;color:#9c0006;font-weight:normal;font-style:normal;transform:scaleX(0.9671);">=СЧЁТЕСЛИМН()</div>
<div style="left:694px;top:259px;width:86px;height:2px;background:#217346;"></div>
<div style="left:694px;top:279px;width:86px;height:2px;background:#217346;"></div>
<div style="left:694px;top:259px;width:2px;height:22px;background:#217346;"></div>
<div style="left:777px;top:278px;width:4px;height:4px;background:#217346;"></div>
<div style="left:0px;top:40px;width:1280px;height:20px;background:#e7e7e9;"></div>
<div style="left:0px;top:60px;width:25px;height:660px;background:#e7e7e9;"></div>
<svg style="position:absolute;left:10px;top:45px" width="13" height="13"><path d="M12 0 L12 12 L0 12Z" fill="#b9b9b9"/></svg>
<div style="left:60px;top:40px;width:1px;height:20px;background:#c6c6c6;"></div>
<div style="left:131px;top:40px;width:1px;height:20px;background:#c6c6c6;"></div>
<div style="left:202px;top:40px;width:1px;height:20px;background:#c6c6c6;"></div>
<div style="left:269px;top:40px;width:1px;height:20px;background:#c6c6c6;"></div>
<div style="left:336px;top:40px;width:1px;height:20px;background:#c6c6c6;"></div>
<div style="left:387px;top:40px;width:1px;height:20px;background:#c6c6c6;"></div>
<div style="left:464px;top:40px;width:1px;height:20px;background:#c6c6c6;"></div>
<div style="left:528px;top:40px;width:1px;height:20px;background:#c6c6c6;"></div>
<div style="left:554px;top:40px;width:1px;height:20px;background:#c6c6c6;"></div>
<div style="left:589px;top:40px;width:1px;height:20px;background:#c6c6c6;"></div>
<div style="left:695px;top:40px;width:1px;height:20px;background:#c6c6c6;"></div>
<div style="left:779px;top:40px;width:1px;height:20px;background:#c6c6c6;"></div>
<div style="left:863px;top:40px;width:1px;height:20px;background:#c6c6c6;"></div>
<div style="left:947px;top:40px;width:1px;height:20px;background:#c6c6c6;"></div>
<div style="left:1031px;top:40px;width:1px;height:20px;background:#c6c6c6;"></div>
<div style="left:1115px;top:40px;width:1px;height:20px;background:#c6c6c6;"></div>
<div style="left:1179px;top:40px;width:1px;height:20px;background:#c6c6c6;"></div>
<div style="left:1243px;top:40px;width:1px;height:20px;background:#c6c6c6;"></div>
<div style="left:1307px;top:40px;width:1px;height:20px;background:#c6c6c6;"></div>
<div style="left:25px;top:40px;width:1px;height:20px;background:#c6c6c6;"></div>
<div style="left:695px;top:40px;width:84px;height:20px;background:#d2d2d2;"></div>
<div style="left:0px;top:60px;width:1280px;height:1px;background:#a6a6a6;"></div>
<div style="left:695px;top:58px;width:84px;height:2px;background:#217346;"></div>
<div style="left:0px;top:80px;width:25px;height:1px;background:#c6c6c6;"></div>
<div style="left:0px;top:100px;width:25px;height:1px;background:#c6c6c6;"></div>
<div style="left:0px;top:120px;width:25px;height:1px;background:#c6c6c6;"></div>
<div style="left:0px;top:140px;width:25px;height:1px;background:#c6c6c6;"></div>
<div style="left:0px;top:160px;width:25px;height:1px;background:#c6c6c6;"></div>
<div style="left:0px;top:180px;width:25px;height:1px;background:#c6c6c6;"></div>
<div style="left:0px;top:200px;width:25px;height:1px;background:#c6c6c6;"></div>
<div style="left:0px;top:220px;width:25px;height:1px;background:#c6c6c6;"></div>
<div style="left:0px;top:240px;width:25px;height:1px;background:#c6c6c6;"></div>
<div style="left:0px;top:260px;width:25px;height:1px;background:#c6c6c6;"></div>
<div style="left:0px;top:280px;width:25px;height:1px;background:#c6c6c6;"></div>
<div style="left:0px;top:300px;width:25px;height:1px;background:#c6c6c6;"></div>
<div style="left:0px;top:320px;width:25px;height:1px;background:#c6c6c6;"></div>
<div style="left:0px;top:340px;width:25px;height:1px;background:#c6c6c6;"></div>
<div style="left:0px;top:360px;width:25px;height:1px;background:#c6c6c6;"></div>
<div style="left:0px;top:380px;width:25px;height:1px;background:#c6c6c6;"></div>
<div style="left:0px;top:400px;width:25px;height:1px;background:#c6c6c6;"></div>
<div style="left:0px;top:420px;width:25px;height:1px;background:#c6c6c6;"></div>
<div style="left:0px;top:440px;width:25px;height:1px;background:#c6c6c6;"></div>
<div style="left:0px;top:460px;width:25px;height:1px;background:#c6c6c6;"></div>
<div style="left:0px;top:480px;width:25px;height:1px;background:#c6c6c6;"></div>
<div style="left:0px;top:500px;width:25px;height:1px;background:#c6c6c6;"></div>
<div style="left:0px;top:520px;width:25px;height:1px;background:#c6c6c6;"></div>
<div style="left:0px;top:540px;width:25px;height:1px;background:#c6c6c6;"></div>
<div style="left:0px;top:560px;width:25px;height:1px;background:#c6c6c6;"></div>
<div style="left:0px;top:580px;width:25px;height:1px;background:#c6c6c6;"></div>
<div style="left:0px;top:600px;width:25px;height:1px;background:#c6c6c6;"></div>
<div style="left:0px;top:620px;width:25px;height:1px;background:#c6c6c6;"></div>
<div style="left:0px;top:640px;width:25px;height:1px;background:#c6c6c6;"></div>
<div style="left:0px;top:660px;width:25px;height:1px;background:#c6c6c6;"></div>
<div style="left:0px;top:680px;width:25px;height:1px;background:#c6c6c6;"></div>
<div style="left:0px;top:700px;width:25px;height:1px;background:#c6c6c6;"></div>
<div style="left:0px;top:720px;width:25px;height:1px;background:#c6c6c6;"></div>
<div style="left:0px;top:260px;width:25px;height:20px;background:#d2d2d2;"></div>
<div style="left:25px;top:60px;width:1px;height:660px;background:#a6a6a6;"></div>
<div style="left:24px;top:260px;width:2px;height:21px;background:#217346;"></div>
<div class="t" style="left:38.83px;top:44.00px;font-size:12.5px;line-height:14px;color:#222;font-weight:normal;font-style:normal;-webkit-text-stroke:0;">A</div>
<div class="t" style="left:91.65px;top:44.00px;font-size:12.5px;line-height:14px;color:#222;font-weight:normal;font-style:normal;-webkit-text-stroke:0;">B</div>
<div class="t" style="left:162.43px;top:44.00px;font-size:12.5px;line-height:14px;color:#222;font-weight:normal;font-style:normal;-webkit-text-stroke:0;">C</div>
<div class="t" style="left:231.28px;top:44.00px;font-size:12.5px;line-height:14px;color:#222;font-weight:normal;font-style:normal;-webkit-text-stroke:0;">D</div>
<div class="t" style="left:298.60px;top:44.00px;font-size:12.5px;line-height:14px;color:#222;font-weight:normal;font-style:normal;-webkit-text-stroke:0;">E</div>
<div class="t" style="left:357.93px;top:44.00px;font-size:12.5px;line-height:14px;color:#222;font-weight:normal;font-style:normal;-webkit-text-stroke:0;">F</div>
<div class="t" style="left:421.30px;top:44.00px;font-size:12.5px;line-height:14px;color:#222;font-weight:normal;font-style:normal;-webkit-text-stroke:0;">G</div>
<div class="t" style="left:491.98px;top:44.00px;font-size:12.5px;line-height:14px;color:#222;font-weight:normal;font-style:normal;-webkit-text-stroke:0;">H</div>
<div class="t" style="left:539.75px;top:44.00px;font-size:12.5px;line-height:14px;color:#222;font-weight:normal;font-style:normal;-webkit-text-stroke:0;">I</div>
<div class="t" style="left:569.25px;top:44.00px;font-size:12.5px;line-height:14px;color:#222;font-weight:normal;font-style:normal;-webkit-text-stroke:0;">J</div>
<div class="t" style="left:637.90px;top:44.00px;font-size:12.5px;line-height:14px;color:#222;font-weight:normal;font-style:normal;-webkit-text-stroke:0;">K</div>
<div class="t" style="left:733.73px;top:44.00px;font-size:12.5px;line-height:14px;color:#222;font-weight:normal;font-style:normal;-webkit-text-stroke:0;">L</div>
<div class="t" style="left:816.30px;top:44.00px;font-size:12.5px;line-height:14px;color:#222;font-weight:normal;font-style:normal;-webkit-text-stroke:0;">M</div>
<div class="t" style="left:900.98px;top:44.00px;font-size:12.5px;line-height:14px;color:#222;font-weight:normal;font-style:normal;-webkit-text-stroke:0;">N</div>
<div class="t" style="left:984.65px;top:44.00px;font-size:12.5px;line-height:14px;color:#222;font-weight:normal;font-style:normal;-webkit-text-stroke:0;">O</div>
<div class="t" style="left:1069.15px;top:44.00px;font-size:12.5px;line-height:14px;color:#222;font-weight:normal;font-style:normal;-webkit-text-stroke:0;">P</div>
<div class="t" style="left:1142.65px;top:44.00px;font-size:12.5px;line-height:14px;color:#222;font-weight:normal;font-style:normal;-webkit-text-stroke:0;">Q</div>
<div class="t" style="left:1206.78px;top:44.00px;font-size:12.5px;line-height:14px;color:#222;font-weight:normal;font-style:normal;-webkit-text-stroke:0;">R</div>
<div class="t" style="left:1271.33px;top:44.00px;font-size:12.5px;line-height:14px;color:#222;font-weight:normal;font-style:normal;-webkit-text-stroke:0;">S</div>
<div class="t" style="left:9.15px;top:64.60px;font-size:12.5px;line-height:14px;color:#222;font-weight:normal;font-style:normal;-webkit-text-stroke:0;">1</div>
<div class="t" style="left:9.33px;top:84.60px;font-size:12.5px;line-height:14px;color:#222;font-weight:normal;font-style:normal;-webkit-text-stroke:0;">2</div>
<div class="t" style="left:9.35px;top:104.60px;font-size:12.5px;line-height:14px;color:#222;font-weight:normal;font-style:normal;-webkit-text-stroke:0;">3</div>
<div class="t" style="left:9.38px;top:124.60px;font-size:12.5px;line-height:14px;color:#222;font-weight:normal;font-style:normal;-webkit-text-stroke:0;">4</div>
<div class="t" style="left:9.33px;top:144.60px;font-size:12.5px;line-height:14px;color:#222;font-weight:normal;font-style:normal;-webkit-text-stroke:0;">5</div>
<div class="t" style="left:9.28px;top:164.60px;font-size:12.5px;line-height:14px;color:#222;font-weight:normal;font-style:normal;-webkit-text-stroke:0;">6</div>
<div class="t" style="left:9.33px;top:184.60px;font-size:12.5px;line-height:14px;color:#222;font-weight:normal;font-style:normal;-webkit-text-stroke:0;">7</div>
<div class="t" style="left:9.33px;top:204.60px;font-size:12.5px;line-height:14px;color:#222;font-weight:normal;font-style:normal;-webkit-text-stroke:0;">8</div>
<div class="t" style="left:9.32px;top:224.60px;font-size:12.5px;line-height:14px;color:#222;font-weight:normal;font-style:normal;-webkit-text-stroke:0;">9</div>
<div class="t" style="left:5.60px;top:244.60px;font-size:12.5px;line-height:14px;color:#222;font-weight:normal;font-style:normal;-webkit-text-stroke:0;">10</div>
<div class="t" style="left:6.15px;top:264.60px;font-size:12.5px;line-height:14px;color:#222;font-weight:normal;font-style:normal;-webkit-text-stroke:0;">11</div>
<div class="t" style="left:5.68px;top:284.60px;font-size:12.5px;line-height:14px;color:#222;font-weight:normal;font-style:normal;-webkit-text-stroke:0;">12</div>
<div class="t" style="left:5.63px;top:304.60px;font-size:12.5px;line-height:14px;color:#222;font-weight:normal;font-style:normal;-webkit-text-stroke:0;">13</div>
<div class="t" style="left:5.55px;top:324.60px;font-size:12.5px;line-height:14px;color:#222;font-weight:normal;font-style:normal;-webkit-text-stroke:0;">14</div>
<div class="t" style="left:5.63px;top:344.60px;font-size:12.5px;line-height:14px;color:#222;font-weight:normal;font-style:normal;-webkit-text-stroke:0;">15</div>
<div class="t" style="left:5.63px;top:364.60px;font-size:12.5px;line-height:14px;color:#222;font-weight:normal;font-style:normal;-webkit-text-stroke:0;">16</div>
<div class="t" style="left:5.68px;top:384.60px;font-size:12.5px;line-height:14px;color:#222;font-weight:normal;font-style:normal;-webkit-text-stroke:0;">17</div>
<div class="t" style="left:5.63px;top:404.60px;font-size:12.5px;line-height:14px;color:#222;font-weight:normal;font-style:normal;-webkit-text-stroke:0;">18</div>
<div class="t" style="left:5.65px;top:424.60px;font-size:12.5px;line-height:14px;color:#222;font-weight:normal;font-style:normal;-webkit-text-stroke:0;">19</div>
<div class="t" style="left:5.78px;top:444.60px;font-size:12.5px;line-height:14px;color:#222;font-weight:normal;font-style:normal;-webkit-text-stroke:0;">20</div>
<div class="t" style="left:5.85px;top:464.60px;font-size:12.5px;line-height:14px;color:#222;font-weight:normal;font-style:normal;-webkit-text-stroke:0;">21</div>
<div class="t" style="left:5.85px;top:484.60px;font-size:12.5px;line-height:14px;color:#222;font-weight:normal;font-style:normal;-webkit-text-stroke:0;">22</div>
<div class="t" style="left:5.80px;top:504.60px;font-size:12.5px;line-height:14px;color:#222;font-weight:normal;font-style:normal;-webkit-text-stroke:0;">23</div>
<div class="t" style="left:5.73px;top:524.60px;font-size:12.5px;line-height:14px;color:#222;font-weight:normal;font-style:normal;-webkit-text-stroke:0;">24</div>
<div class="t" style="left:5.80px;top:544.60px;font-size:12.5px;line-height:14px;color:#222;font-weight:normal;font-style:normal;-webkit-text-stroke:0;">25</div>
<div class="t" style="left:5.80px;top:564.60px;font-size:12.5px;line-height:14px;color:#222;font-weight:normal;font-style:normal;-webkit-text-stroke:0;">26</div>
<div class="t" style="left:5.85px;top:584.60px;font-size:12.5px;line-height:14px;color:#222;font-weight:normal;font-style:normal;-webkit-text-stroke:0;">27</div>
<div class="t" style="left:5.80px;top:604.60px;font-size:12.5px;line-height:14px;color:#222;font-weight:normal;font-style:normal;-webkit-text-stroke:0;">28</div>
<div class="t" style="left:5.83px;top:624.60px;font-size:12.5px;line-height:14px;color:#222;font-weight:normal;font-style:normal;-webkit-text-stroke:0;">29</div>
<div class="t" style="left:5.85px;top:644.60px;font-size:12.5px;line-height:14px;color:#222;font-weight:normal;font-style:normal;-webkit-text-stroke:0;">30</div>
<div class="t" style="left:5.93px;top:664.60px;font-size:12.5px;line-height:14px;color:#222;font-weight:normal;font-style:normal;-webkit-text-stroke:0;">31</div>
<div class="t" style="left:5.93px;top:684.60px;font-size:12.5px;line-height:14px;color:#222;font-weight:normal;font-style:normal;-webkit-text-stroke:0;">32</div>
<div class="t" style="left:5.88px;top:704.60px;font-size:12.5px;line-height:14px;color:#222;font-weight:normal;font-style:normal;-webkit-text-stroke:0;">33</div>
<div style="left:660px;top:395px;width:586px;height:330px;background:#fff;border:1px solid #777;box-sizing:border-box;box-shadow:0 0 5px rgba(0,0,0,0.12);"></div>
<div style="left:662px;top:426px;width:581px;height:300px;background:#f0f0f1;"></div>
<div class="t" style="left:669.50px;top:404.20px;font-size:12.5px;line-height:14px;color:#222;font-weight:normal;font-style:normal;transform:scaleX(0.9780);">Аргументы функции</div>
<div class="t" style="left:1174.39px;top:402.30px;font-size:14px;line-height:16px;color:#111;font-weight:normal;font-style:normal;transform:scaleX(0.7407);-webkit-text-stroke:0.45px #111;">?</div>
<svg style="position:absolute;left:1216px;top:404px" width="12" height="12"><path d="M0.9 0.9 L11.1 11.1 M11.1 0.9 L0.9 11.1" stroke="#222" stroke-width="1.0"/></svg>
<div style="left:668px;top:440px;width:570px;height:130px;border:1px solid #dfdfdf;box-shadow:inset 1px 1px 0 #fafafa;box-sizing:border-box;"></div>
<div style="left:671px;top:432px;width:75px;height:14px;background:#f0f0f1;"></div>
<div class="t" style="left:673.09px;top:433.20px;font-size:12px;line-height:14px;color:#222;font-weight:normal;font-style:normal;transform:scaleX(0.8552);">СЧЁТЕСЛИМН</div>
<div class="t" style="left:687.71px;top:456.20px;font-size:12px;line-height:14px;color:#000;font-weight:bold;font-style:normal;transform:scaleX(0.9083);">Диапазон_условия1</div>
<div class="t" style="left:745.90px;top:478.30px;font-size:12px;line-height:14px;color:#000;font-weight:bold;font-style:normal;transform:scaleX(0.9008);">Условие1</div>
<div style="left:806px;top:453px;width:171px;height:20px;background:#fff;border:1px solid #aaa;box-sizing:border-box;"></div>
<div style="left:976px;top:453px;width:22px;height:20px;background:#fff;border:2px solid #b8b8b8;box-sizing:border-box;"></div>
<svg style="position:absolute;left:980px;top:457px" width="13" height="12"><path d="M6.5 1 L6.5 9 M2.5 5 L6.5 1 L10.5 5" stroke="#111" stroke-width="2" fill="none"/><rect x="2" y="10" width="9" height="1.5" fill="#111"/></svg>
<div class="t" style="left:1007.84px;top:455.50px;font-size:12px;line-height:14px;color:#222;font-weight:normal;font-style:normal;transform:scaleX(0.8305);">=</div>
<div class="t" style="left:1023.33px;top:455.70px;font-size:12.5px;line-height:14px;color:#9a9a9a;font-weight:bold;font-style:normal;transform:scaleX(0.8282);">ссылка</div>
<div style="left:806px;top:476px;width:171px;height:20px;background:#fff;border:1px solid #aaa;box-sizing:border-box;"></div>
<div style="left:976px;top:476px;width:22px;height:20px;background:#fff;border:2px solid #b8b8b8;box-sizing:border-box;"></div>
<svg style="position:absolute;left:980px;top:480px" width="13" height="12"><path d="M6.5 1 L6.5 9 M2.5 5 L6.5 1 L10.5 5" stroke="#111" stroke-width="2" fill="none"/><rect x="2" y="10" width="9" height="1.5" fill="#111"/></svg>
<div class="t" style="left:1007.84px;top:478.50px;font-size:12px;line-height:14px;color:#222;font-weight:normal;font-style:normal;transform:scaleX(0.8305);">=</div>
<div class="t" style="left:1023.61px;top:478.70px;font-size:12.5px;line-height:14px;color:#9a9a9a;font-weight:bold;font-style:normal;transform:scaleX(0.9068);">любое</div>
<div style="left:810px;top:457px;width:1px;height:13px;background:#000;"></div>
<div class="t" style="left:1007.84px;top:574.00px;font-size:12px;line-height:14px;color:#222;font-weight:normal;font-style:normal;transform:scaleX(0.8305);">=</div>
<div class="t" style="left:666.59px;top:591.00px;font-size:12px;line-height:14px;color:#111;font-weight:normal;font-style:normal;transform:scaleX(0.9602);">Подсчитывает количество ячеек, удовлетворяющих заданному набору условий.</div>
<div class="t" style="left:752.41px;top:614.80px;font-size:12px;line-height:14px;color:#000;font-weight:bold;font-style:normal;transform:scaleX(0.9135);">Диапазон_условия1:</div>
<div class="t" style="left:873.60px;top:615.00px;font-size:12px;line-height:14px;color:#111;font-weight:normal;font-style:normal;transform:scaleX(0.9688);">диапазон ячеек, проверяемый на соответствие определенному</div>
<div class="t" style="left:873.70px;top:627.80px;font-size:12px;line-height:14px;color:#111;font-weight:normal;font-style:normal;transform:scaleX(0.9600);">условию.</div>
<div style="left:667px;top:665px;width:573px;height:1px;background:#dcdcdc;"></div>
<div class="t" style="left:667.16px;top:678.00px;font-size:12px;line-height:14px;color:#111;font-weight:normal;font-style:normal;transform:scaleX(0.9837);">Значение:</div>
<div class="t" style="left:666.91px;top:706.50px;font-size:12px;line-height:14px;color:#1a6fc4;font-weight:normal;font-style:normal;transform:scaleX(0.9848);text-decoration:underline;">Справка по этой функции</div>
<div style="left:1080px;top:702px;width:74px;height:30px;background:#e1e1e1;border:2px solid #0a64c8;box-sizing:border-box;"></div>
<div style="left:1164px;top:702px;width:74px;height:30px;background:#e1e1e1;border:1px solid #adadad;box-sizing:border-box;"></div>
<div class="t" style="left:1109.24px;top:705.60px;font-size:12px;line-height:14px;color:#000;font-weight:normal;font-style:normal;transform:scaleX(0.8383);">OK</div>
<div class="t" style="left:1180.09px;top:705.60px;font-size:12px;line-height:14px;color:#000;font-weight:normal;font-style:normal;transform:scaleX(0.9307);">Отмена</div>
<svg style="position:absolute;left:685px;top:437px;overflow:visible;filter:drop-shadow(1.5px 1.5px 1.5px rgba(0,0,0,0.45));" width="14" height="21"><path d="M0.8 0.8 L0.8 16.2 L4.6 12.6 L7.4 18.6 L9.8 17.6 L7.1 11.6 L12.2 11.6 Z" fill="#fff" stroke="#000" stroke-width="1.1" stroke-linejoin="round"/></svg>
</body></html>
